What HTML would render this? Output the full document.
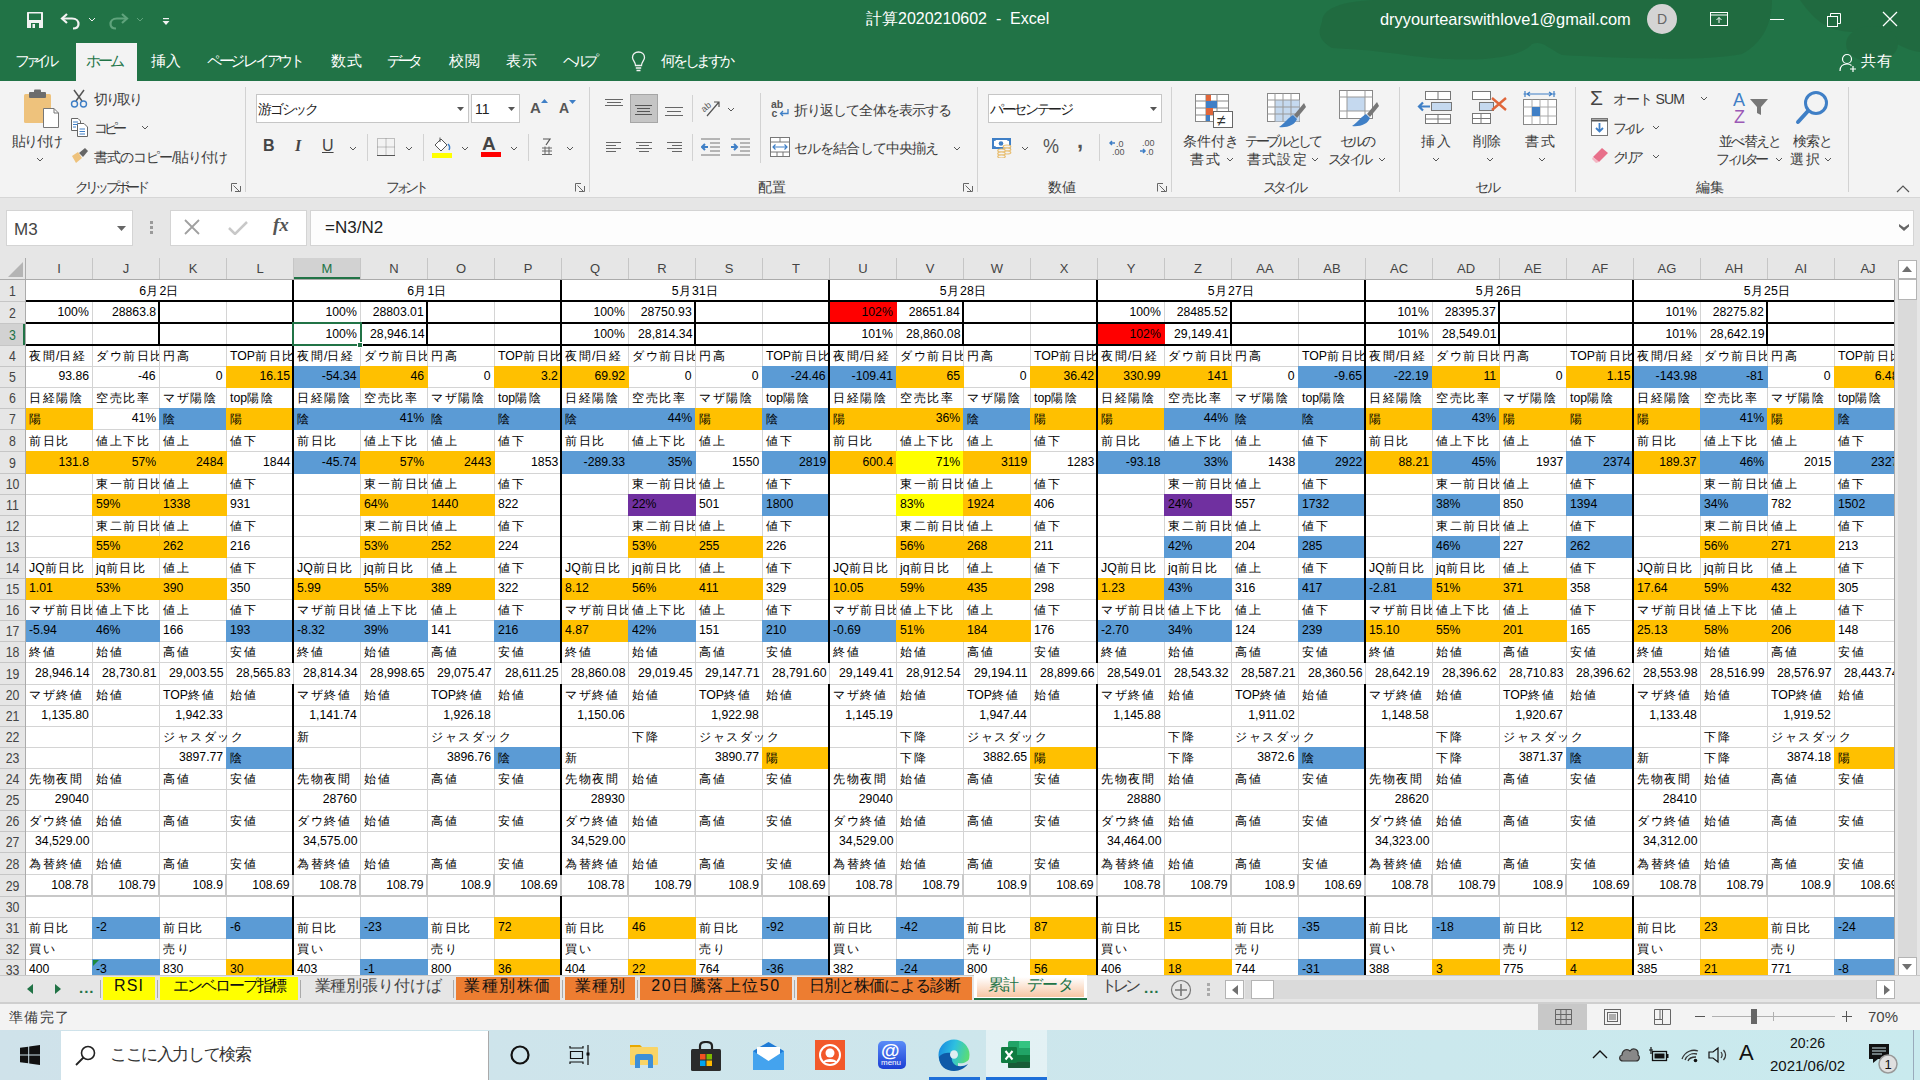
<!DOCTYPE html>
<html lang="ja"><head><meta charset="utf-8"><title>Excel</title><style>
*{margin:0;padding:0;box-sizing:border-box}
html,body{width:1920px;height:1080px;overflow:hidden;background:#fff;font-family:"Liberation Sans",sans-serif}
.a{position:absolute;white-space:nowrap}
.s{display:inline-block;transform:scaleX(0.9)}
.t{position:absolute;height:14px;line-height:14px;font-size:13.6px;color:#000;white-space:nowrap;overflow:hidden;padding:0 3px}
.tj{font-size:12.3px}
.j{letter-spacing:1.5px}
.tab{top:51px;font-size:15px;color:#fff;line-height:20px;font-feature-settings:'palt'}
.tt{line-height:20px}
.rt{font-size:14px;color:#3c3c3c;line-height:18px;font-feature-settings:'palt'}
.sep{width:1px;background:#d2d2d2}
.box{background:#fff;border:1px solid #c6c6c6}
.hd{height:16px;line-height:16px;font-size:13px;text-align:center}
.sb{background:#fff;border:1px solid #b4b4b4}
.stab{top:977px;height:23px;line-height:18px;font-size:16px;color:#111;text-align:center;font-feature-settings:'palt'}
.tsep{top:980px;width:1px;height:18px;background:#aaa}
</style></head>
<body>
<!-- TITLE BAR -->
<div class="a" style="left:0;top:0;width:1920px;height:81px;background:#217346;overflow:hidden">
  <svg class="a" style="left:0;top:0" width="1920" height="81">
    <g fill="#1f6139" opacity="0.45">
      <path d="M1322 22 C1322 6 1350 0 1380 0 L1772 0 C1772 22 1764 42 1742 54 C1700 62 1620 58 1562 55 C1548 48 1542 40 1532 44 C1520 58 1480 62 1432 58 C1400 55 1378 50 1332 48 C1318 40 1318 32 1322 22 Z"></path>
      <path d="M1800 0 L1920 0 L1920 52 C1900 50 1885 32 1855 32 C1830 32 1815 22 1800 0 Z"></path>
      <ellipse cx="1872" cy="44" rx="26" ry="18"></ellipse>
    </g>
  </svg>
  <!-- save -->
  <svg class="a" style="left:26px;top:11px" width="18" height="18" viewBox="0 0 18 18">
    <path d="M1 1.5 Q1 1 1.5 1 H16.5 Q17 1 17 1.5 V16.5 Q17 17 16.5 17 H1.5 Q1 17 1 16.5 Z" fill="#f2f2f2"></path>
    <rect x="3" y="2.5" width="12" height="6.5" fill="#217346"></rect>
    <rect x="5" y="12" width="8" height="5" fill="#217346"></rect>
    <rect x="6.5" y="13" width="2.5" height="4" fill="#f2f2f2"></rect>
  </svg>
  <!-- undo -->
  <svg class="a" style="left:60px;top:12px" width="22" height="18" viewBox="0 0 22 18">
    <path d="M7 2 L2 6.5 L7 11" fill="none" stroke="#f2f2f2" stroke-width="2.2"></path>
    <path d="M2.5 6.5 H12 C16.5 6.5 18.5 9.5 18.5 12 C18.5 14.5 16.5 16.5 13 16.5" fill="none" stroke="#f2f2f2" stroke-width="2.2"></path>
  </svg>
  <svg class="a" style="left:88px;top:17px" width="8" height="5" viewBox="0 0 8 5"><path d="M1 1 L4 4 L7 1" fill="none" stroke="#f2f2f2" stroke-width="1"></path></svg>
  <!-- redo -->
  <svg class="a" style="left:107px;top:12px" width="22" height="18" viewBox="0 0 22 18">
    <path d="M15 2 L20 6.5 L15 11" fill="none" stroke="#5fa37c" stroke-width="2.2"></path>
    <path d="M19.5 6.5 H10 C5.5 6.5 3.5 9.5 3.5 12 C3.5 14.5 5.5 16.5 9 16.5" fill="none" stroke="#5fa37c" stroke-width="2.2"></path>
  </svg>
  <svg class="a" style="left:136px;top:17px" width="8" height="5" viewBox="0 0 8 5"><path d="M1 1 L4 4 L7 1" fill="none" stroke="#5fa37c" stroke-width="1"></path></svg>
  <svg class="a" style="left:162px;top:18px" width="8" height="8" viewBox="0 0 8 8"><rect x="1" y="0" width="6" height="1.2" fill="#f2f2f2"></rect><path d="M0.5 3 H7.5 L4 7 Z" fill="#f2f2f2"></path></svg>
  <div class="a tt" style="left:866px;top:9px;font-size:16px;color:#fff;white-space:pre">計算2020210602  -  Excel</div>
  <div class="a tt" style="left:1380px;top:9px;font-size:16.4px;color:#fff">dryyourtearswithlove1@gmail.com</div>
  <div class="a" style="left:1647px;top:4px;width:30px;height:30px;border-radius:50%;background:#d4d4d4;color:#666;font-size:14px;line-height:30px;text-align:center">D</div>
  <svg class="a" style="left:1710px;top:12px" width="18" height="14" viewBox="0 0 18 14"><rect x="0.5" y="0.5" width="17" height="13" fill="none" stroke="#fff" stroke-width="1"></rect><line x1="0.5" y1="3" x2="17.5" y2="3" stroke="#fff"></line><path d="M9 11 V5.5 M6.5 8 L9 5.5 L11.5 8" fill="none" stroke="#fff"></path></svg>
  <div class="a" style="left:1770px;top:19px;width:14px;height:1px;background:#fff"></div>
  <svg class="a" style="left:1826px;top:12px" width="16" height="15" viewBox="0 0 16 15"><rect x="1.5" y="4.5" width="10" height="10" fill="none" stroke="#fff"></rect><path d="M4.5 4.5 V1.5 H14.5 V11.5 H11.5" fill="none" stroke="#fff"></path></svg>
  <svg class="a" style="left:1882px;top:11px" width="16" height="16" viewBox="0 0 16 16"><path d="M1 1 L15 15 M15 1 L1 15" stroke="#fff" stroke-width="1.3"></path></svg>
  <!-- tabs -->
  <div class="a" style="left:76px;top:43px;width:61px;height:38px;background:#f3f3f3"></div>
  <div class="a tab" style="left: 15px; letter-spacing: -5.33px;">ファイル</div>
  <div class="a tab" style="left: 86px; color: rgb(33, 115, 70); letter-spacing: -3px;">ホーム</div>
  <div class="a tab" style="left: 151px; letter-spacing: 0px;">挿入</div>
  <div class="a tab" style="left: 207px; letter-spacing: -3.27px;">ページ レイアウト</div>
  <div class="a tab" style="left: 331px; letter-spacing: 1px;">数式</div>
  <div class="a tab" style="left: 387px; letter-spacing: -4.5px;">データ</div>
  <div class="a tab" style="left: 449px; letter-spacing: 1px;">校閲</div>
  <div class="a tab" style="left: 506px; letter-spacing: 1px;">表示</div>
  <div class="a tab" style="left: 563px; letter-spacing: -4.5px;">ヘルプ</div>
  <svg class="a" style="left:631px;top:51px" width="15" height="22" viewBox="0 0 15 22"><path d="M4.5 14.5 C4.5 11 1.5 9.5 1.5 6.5 C1.5 3.2 4 1 7.5 1 C11 1 13.5 3.2 13.5 6.5 C13.5 9.5 10.5 11 10.5 14.5 Z" fill="none" stroke="#f2f2f2" stroke-width="1.3"></path><path d="M4.8 17 H10.2 M5.5 19.5 H9.5" stroke="#f2f2f2" stroke-width="1.3"></path></svg>
  <div class="a tab" style="left: 661px; letter-spacing: -3.2px;">何をしますか</div>
  <svg class="a" style="left:1839px;top:53px" width="18" height="20" viewBox="0 0 18 20"><circle cx="8" cy="6" r="4.5" fill="none" stroke="#fff" stroke-width="1.2"></circle><path d="M1 18 C1 13 4 11 8 11 C10 11 11.5 11.5 12.5 12.5" fill="none" stroke="#fff" stroke-width="1.2"></path><path d="M14 13 V19 M11 16 H17" stroke="#fff" stroke-width="1.2"></path></svg>
  <div class="a tab" style="left: 1861px; letter-spacing: 1px;">共有</div>
</div>

<!-- RIBBON -->
<div class="a" style="left:0;top:81px;width:1920px;height:117px;background:#f3f3f3;border-bottom:1px solid #d6d6d6"></div>
<!-- separators -->
<div class="a sep" style="left:245px;top:87px;height:105px"></div>
<div class="a sep" style="left:589px;top:87px;height:105px"></div>
<div class="a sep" style="left:977px;top:87px;height:105px"></div>
<div class="a sep" style="left:1171px;top:87px;height:105px"></div>
<div class="a sep" style="left:1399px;top:87px;height:105px"></div>
<div class="a sep" style="left:1575px;top:87px;height:105px"></div>
<div class="a sep" style="left:1848px;top:87px;height:105px"></div>
<!-- group labels -->
<div class="a rt" style="left: 75px; top: 178px; letter-spacing: -3.83px;">クリップボード</div>
<div class="a rt" style="left: 386px; top: 178px; letter-spacing: -4.33px;">フォント</div>
<div class="a rt" style="left:758px;top:178px">配置</div>
<div class="a rt" style="left:1048px;top:178px">数値</div>
<div class="a rt" style="left: 1263px; top: 178px; letter-spacing: -3.67px;">スタイル</div>
<div class="a rt" style="left: 1475px; top: 178px; letter-spacing: -2px;">セル</div>
<div class="a rt" style="left:1696px;top:178px">編集</div>
<!-- launchers -->
<svg class="a" style="left:231px;top:183px" width="10" height="9" viewBox="0 0 10 9"><path d="M0.5 8.5 V0.5 H6 M9.5 3 V8.5 H4 M2.5 2.5 L8 8" fill="none" stroke="#666" stroke-width="1"></path></svg>
<svg class="a" style="left:575px;top:183px" width="10" height="9" viewBox="0 0 10 9"><path d="M0.5 8.5 V0.5 H6 M9.5 3 V8.5 H4 M2.5 2.5 L8 8" fill="none" stroke="#666" stroke-width="1"></path></svg>
<svg class="a" style="left:963px;top:183px" width="10" height="9" viewBox="0 0 10 9"><path d="M0.5 8.5 V0.5 H6 M9.5 3 V8.5 H4 M2.5 2.5 L8 8" fill="none" stroke="#666" stroke-width="1"></path></svg>
<svg class="a" style="left:1157px;top:183px" width="10" height="9" viewBox="0 0 10 9"><path d="M0.5 8.5 V0.5 H6 M9.5 3 V8.5 H4 M2.5 2.5 L8 8" fill="none" stroke="#666" stroke-width="1"></path></svg>
<svg class="a" style="left:1896px;top:185px" width="14" height="8" viewBox="0 0 14 8"><path d="M1 7 L7 1 L13 7" fill="none" stroke="#555" stroke-width="1.2"></path></svg>

<!-- CLIPBOARD -->
<svg class="a" style="left:23px;top:89px" width="37" height="40" viewBox="0 0 37 40">
  <rect x="1" y="5" width="27" height="29" rx="1.5" fill="#eec27c"></rect>
  <rect x="6" y="3" width="17" height="6" rx="1" fill="#6d6d6d"></rect>
  <rect x="11" y="0.5" width="7" height="4" rx="1" fill="#6d6d6d"></rect>
  <path d="M20.5 19.5 H31 L35.5 24 V38.5 H20.5 Z" fill="#fff" stroke="#777" stroke-width="1"></path>
  <path d="M31 19.5 V24 H35.5" fill="none" stroke="#777" stroke-width="1"></path>
</svg>
<div class="a rt" style="left: 12px; top: 132px; letter-spacing: -1.67px;">貼り付け</div>
<svg class="a chev" style="left:36px;top:157px" width="8" height="5" viewBox="0 0 8 5"><path d="M1 1 L4 4 L7 1" fill="none" stroke="#555"></path></svg>
<svg class="a" style="left:70px;top:89px" width="18" height="19" viewBox="0 0 18 19">
  <path d="M4 1 L12 12 M14 1 L6 12" stroke="#555" stroke-width="1.5"></path>
  <circle cx="4.5" cy="15" r="3" fill="none" stroke="#3f7fc6" stroke-width="1.4"></circle>
  <circle cx="13.5" cy="15" r="3" fill="none" stroke="#3f7fc6" stroke-width="1.4"></circle>
</svg>
<div class="a rt" style="left: 94px; top: 90px; letter-spacing: -2.33px;">切り取り</div>
<svg class="a" style="left:71px;top:118px" width="18" height="19" viewBox="0 0 18 19">
  <path d="M0.5 0.5 H7 L9.5 3 V12.5 H0.5 Z" fill="#fff" stroke="#666"></path>
  <path d="M6.5 5.5 H13 L16.5 9 V18.5 H6.5 Z" fill="#fff" stroke="#666"></path>
  <path d="M2 4 H7 M2 6.5 H7 M2 9 H5 M8.5 11 H14 M8.5 13.5 H14 M8.5 16 H14" stroke="#3f7fc6" stroke-width="1"></path>
</svg>
<div class="a rt" style="left: 94px; top: 119px; letter-spacing: -4.5px;">コピー</div>
<svg class="a chev" style="left:141px;top:125px" width="8" height="5" viewBox="0 0 8 5"><path d="M1 1 L4 4 L7 1" fill="none" stroke="#555"></path></svg>
<svg class="a" style="left:71px;top:147px" width="18" height="17" viewBox="0 0 18 17">
  <path d="M1 9 L7 5 L11 11 L5 16 Z" fill="#eec27c"></path>
  <path d="M8 6 L14 1 L17 4 L12 10 Z" fill="#666"></path>
</svg>
<div class="a rt" style="left: 94px; top: 148px; letter-spacing: -0.99px;">書式のコピー/貼り付け</div>

<!-- FONT -->
<div class="a box" style="left:256px;top:94px;width:213px;height:29px"></div>
<div class="a rt" style="left: 258px; top: 100px; font-size: 14px; color: rgb(34, 34, 34); letter-spacing: -2.25px;">游ゴシック</div>
<svg class="a" style="left:457px;top:107px" width="7" height="4" viewBox="0 0 7 4"><path d="M0 0 H7 L3.5 4 Z" fill="#555"></path></svg>
<div class="a box" style="left:471px;top:94px;width:49px;height:29px"></div>
<div class="a rt" style="left:475px;top:100px;font-size:14px;color:#222">11</div>
<svg class="a" style="left:508px;top:107px" width="7" height="4" viewBox="0 0 7 4"><path d="M0 0 H7 L3.5 4 Z" fill="#555"></path></svg>
<div class="a" style="left:530px;top:99px;font-size:15px;color:#555;font-weight:bold">A</div>
<svg class="a" style="left:541px;top:99px" width="7" height="4" viewBox="0 0 7 4"><path d="M0 4 L3.5 0 L7 4 Z" fill="#3f7fc6"></path></svg>
<div class="a" style="left:559px;top:100px;font-size:14px;color:#555;font-weight:bold">A</div>
<svg class="a" style="left:569px;top:100px" width="7" height="4" viewBox="0 0 7 4"><path d="M0 0 L3.5 4 L7 0 Z" fill="#3f7fc6"></path></svg>
<div class="a" style="left:263px;top:137px;font-size:16px;color:#444;font-weight:bold">B</div>
<div class="a" style="left:295px;top:137px;font-size:16px;color:#444;font-style:italic;font-family:'Liberation Serif',serif;font-weight:bold">I</div>
<div class="a" style="left:322px;top:137px;font-size:16px;color:#444;text-decoration:underline">U</div>
<svg class="a chev" style="left:349px;top:146px" width="8" height="5" viewBox="0 0 8 5"><path d="M1 1 L4 4 L7 1" fill="none" stroke="#555"></path></svg>
<div class="a sep" style="left:367px;top:134px;height:27px"></div>
<svg class="a" style="left:377px;top:138px" width="18" height="18" viewBox="0 0 18 18"><path d="M0.5 0.5 H17.5 V17.5 H0.5 Z M9 0.5 V17.5 M0.5 9 H17.5" fill="none" stroke="#888" stroke-width="1" stroke-dasharray="1 1"></path><path d="M0 17.5 H18" stroke="#555"></path></svg>
<svg class="a chev" style="left:405px;top:146px" width="8" height="5" viewBox="0 0 8 5"><path d="M1 1 L4 4 L7 1" fill="none" stroke="#555"></path></svg>
<div class="a sep" style="left:423px;top:134px;height:27px"></div>
<svg class="a" style="left:432px;top:137px" width="21" height="21" viewBox="0 0 21 21"><path d="M3 8 L9 2 L15 8 L9 14 Z" fill="#fff" stroke="#555"></path><path d="M8 0.5 V5" stroke="#555"></path><path d="M16 7 C18 9 18 11 17 13" fill="none" stroke="#3f7fc6" stroke-width="1.5"></path><rect x="0" y="16" width="20" height="5" fill="#ffff00"></rect></svg>
<svg class="a chev" style="left:461px;top:146px" width="8" height="5" viewBox="0 0 8 5"><path d="M1 1 L4 4 L7 1" fill="none" stroke="#555"></path></svg>
<div class="a" style="left:482px;top:134px;font-size:19px;color:#444;font-weight:bold;line-height:20px">A</div>
<div class="a" style="left:481px;top:152px;width:20px;height:5px;background:#ff0000"></div>
<svg class="a chev" style="left:510px;top:146px" width="8" height="5" viewBox="0 0 8 5"><path d="M1 1 L4 4 L7 1" fill="none" stroke="#555"></path></svg>
<div class="a sep" style="left:528px;top:134px;height:27px"></div>
<svg class="a" style="left:541px;top:138px" width="12" height="18" viewBox="0 0 12 18"><path d="M2 1 H9 L5 7" fill="none" stroke="#555" stroke-width="1.2"></path><path d="M1 10 H11 M1 13 H11 M1 16.5 H11 M4 8.5 V17 M8 8.5 V17" stroke="#666" stroke-width="1"></path></svg>
<svg class="a chev" style="left:566px;top:146px" width="8" height="5" viewBox="0 0 8 5"><path d="M1 1 L4 4 L7 1" fill="none" stroke="#555"></path></svg>

<!-- ALIGNMENT -->
<svg class="a" style="left:605px;top:98px" width="19" height="10" viewBox="0 0 19 10"><path d="M0 1.5 H18 M2 4.5 H16 M0 7.5 H18" stroke="#666" stroke-width="1"></path></svg>
<div class="a" style="left:630px;top:94px;width:28px;height:29px;background:#c5c5c5;border:1px solid #a6a6a6"></div>
<svg class="a" style="left:635px;top:104px" width="19" height="12" viewBox="0 0 19 12"><path d="M0 1.5 H17 M2 4.5 H15 M2 7.5 H15 M0 10.5 H17" stroke="#555" stroke-width="1"></path></svg>
<svg class="a" style="left:665px;top:105px" width="19" height="13" viewBox="0 0 19 13"><path d="M0 2.5 H18 M2 6.5 H16 M0 10.5 H18" stroke="#666" stroke-width="1"></path></svg>
<div class="a sep" style="left:692px;top:95px;height:27px"></div>
<svg class="a" style="left:700px;top:97px" width="22" height="20" viewBox="0 0 22 20"><text x="1" y="13" font-size="9" fill="#555" transform="rotate(-40 6 10)" font-family="Liberation Sans">ab</text><path d="M7 19 L19 5 M14 5 H19 V10" fill="none" stroke="#555" stroke-width="1.2"></path></svg>
<svg class="a chev" style="left:727px;top:107px" width="8" height="5" viewBox="0 0 8 5"><path d="M1 1 L4 4 L7 1" fill="none" stroke="#555"></path></svg>
<div class="a sep" style="left:760px;top:93px;height:70px"></div>
<svg class="a" style="left:771px;top:99px" width="20" height="20" viewBox="0 0 20 20"><text x="0" y="8.5" font-size="10.5" fill="#555" font-family="Liberation Sans" font-weight="bold">ab</text><text x="0.5" y="18" font-size="10.5" fill="#555" font-family="Liberation Sans" font-weight="bold">c</text><path d="M17 10 V14.5 H9.5 M12 12 L9.5 14.5 L12 17" fill="none" stroke="#3f7fc6" stroke-width="1.3"></path></svg>
<div class="a rt" style="left: 794px; top: 101px; letter-spacing: -0.91px;">折り返して全体を表示する</div>
<svg class="a" style="left:606px;top:141px" width="16" height="12" viewBox="0 0 16 12"><path d="M0 1.5 H15 M0 4.5 H10 M0 7.5 H15 M0 10.5 H10" stroke="#666" stroke-width="1"></path></svg>
<svg class="a" style="left:636px;top:141px" width="16" height="12" viewBox="0 0 16 12"><path d="M0 1.5 H16 M3 4.5 H13 M0 7.5 H16 M3 10.5 H13" stroke="#666" stroke-width="1"></path></svg>
<svg class="a" style="left:666px;top:141px" width="16" height="12" viewBox="0 0 16 12"><path d="M1 1.5 H16 M6 4.5 H16 M1 7.5 H16 M6 10.5 H16" stroke="#666" stroke-width="1"></path></svg>
<div class="a sep" style="left:692px;top:134px;height:27px"></div>
<svg class="a" style="left:701px;top:138px" width="20" height="18" viewBox="0 0 20 18"><path d="M0 1 H19 M9 5 H19 M9 9 H19 M9 13 H19 M0 17 H19" stroke="#777" stroke-width="1"></path><path d="M7 9 H1 M4 6 L1 9 L4 12" fill="none" stroke="#3f7fc6" stroke-width="2"></path></svg>
<svg class="a" style="left:731px;top:138px" width="20" height="18" viewBox="0 0 20 18"><path d="M0 1 H19 M9 5 H19 M9 9 H19 M9 13 H19 M0 17 H19" stroke="#777" stroke-width="1"></path><path d="M0 9 H6 M3 6 L6 9 L3 12" fill="none" stroke="#3f7fc6" stroke-width="2"></path></svg>
<svg class="a" style="left:770px;top:137px" width="20" height="20" viewBox="0 0 20 20"><rect x="0.5" y="0.5" width="19" height="19" fill="#fff" stroke="#777"></rect><path d="M0.5 5 H19.5 M0.5 15 H19.5 M10 0.5 V5 M7 15 V19.5 M13 15 V19.5" stroke="#777"></path><path d="M3 10 H17 M5.5 7.5 L3 10 L5.5 12.5 M14.5 7.5 L17 10 L14.5 12.5" fill="none" stroke="#3f7fc6" stroke-width="1.2"></path></svg>
<div class="a rt" style="left: 794px; top: 139px; letter-spacing: -0.9px;">セルを結合して中央揃え</div>
<svg class="a chev" style="left:953px;top:146px" width="8" height="5" viewBox="0 0 8 5"><path d="M1 1 L4 4 L7 1" fill="none" stroke="#555"></path></svg>

<!-- NUMBER -->
<div class="a box" style="left:988px;top:94px;width:174px;height:29px"></div>
<div class="a rt" style="left: 990px; top: 100px; font-size: 14px; color: rgb(34, 34, 34); letter-spacing: -2.33px;">パーセンテージ</div>
<svg class="a" style="left:1150px;top:107px" width="7" height="4" viewBox="0 0 7 4"><path d="M0 0 H7 L3.5 4 Z" fill="#555"></path></svg>
<svg class="a" style="left:992px;top:138px" width="20" height="20" viewBox="0 0 20 20"><rect x="0" y="0" width="19" height="11" fill="#3f7fc6"></rect><path d="M2 3 C4 3 4 2 4 2 H15 C15 2 15 3 17 3 V8 C15 8 15 9 15 9 H4 C4 9 4 8 2 8 Z" fill="#fff"></path><circle cx="9" cy="5.5" r="2.3" fill="#3f7fc6"></circle><g fill="#f3f3f3" stroke="#e8bf74" stroke-width="1.2"><ellipse cx="15" cy="8.5" rx="3.8" ry="1.5"></ellipse><ellipse cx="15" cy="11.5" rx="3.8" ry="1.5"></ellipse><ellipse cx="15" cy="14.5" rx="3.8" ry="1.5"></ellipse><ellipse cx="9.5" cy="12.5" rx="3.8" ry="1.5"></ellipse><ellipse cx="9.5" cy="15.5" rx="3.8" ry="1.5"></ellipse><ellipse cx="9.5" cy="18.5" rx="3.8" ry="1.5"></ellipse></g></svg>
<svg class="a chev" style="left:1021px;top:146px" width="8" height="5" viewBox="0 0 8 5"><path d="M1 1 L4 4 L7 1" fill="none" stroke="#555"></path></svg>
<div class="a" style="left:1043px;top:136px;font-size:18px;color:#555;transform:scaleY(1.1)">%</div>
<div class="a" style="left:1077px;top:128px;font-size:22px;color:#555;font-weight:bold">,</div>
<div class="a sep" style="left:1099px;top:134px;height:27px"></div>
<svg class="a" style="left:1109px;top:138px" width="18" height="18" viewBox="0 0 18 18"><path d="M6 5 H1 M3 3 L1 5 L3 7" fill="none" stroke="#3f7fc6" stroke-width="1.5"></path><text x="7" y="9" font-size="9" fill="#555" font-family="Liberation Sans">.0</text><text x="3" y="17" font-size="9" fill="#555" font-family="Liberation Sans">.00</text></svg>
<svg class="a" style="left:1139px;top:138px" width="18" height="18" viewBox="0 0 18 18"><text x="3" y="8" font-size="9" fill="#555" font-family="Liberation Sans">.00</text><path d="M1 13 H6 M4 11 L6 13 L4 15" fill="none" stroke="#3f7fc6" stroke-width="1.5"></path><text x="7" y="17" font-size="9" fill="#555" font-family="Liberation Sans">.0</text></svg>

<!-- STYLES -->
<svg class="a" style="left:1195px;top:94px" width="40" height="36" viewBox="0 0 40 36">
  <rect x="0.5" y="0.5" width="33" height="27" fill="#fff" stroke="#888"></rect>
  <path d="M0.5 7 H33.5 M0.5 14 H33.5 M0.5 21 H33.5 M11 0.5 V27.5 M22 0.5 V27.5" stroke="#888"></path>
  <rect x="11" y="1" width="5" height="6" fill="#e0663a"></rect><rect x="11" y="7" width="11" height="7" fill="#3f7fc6"></rect><rect x="11" y="14" width="7" height="7" fill="#e0663a"></rect><rect x="11" y="21" width="4" height="6" fill="#3f7fc6"></rect>
  <rect x="18.5" y="17.5" width="19" height="16" fill="#fff" stroke="#666"></rect>
  <text x="22" y="32" font-size="16" fill="#333" font-family="Liberation Sans">≠</text>
</svg>
<div class="a rt" style="left: 1183px; top: 132px; letter-spacing: 0px;">条件付き</div>
<div class="a rt" style="left: 1190px; top: 150px; letter-spacing: 2px;">書式</div>
<svg class="a chev" style="left:1226px;top:157px" width="8" height="5" viewBox="0 0 8 5"><path d="M1 1 L4 4 L7 1" fill="none" stroke="#555"></path></svg>
<svg class="a" style="left:1267px;top:93px" width="40" height="37" viewBox="0 0 40 37">
  <rect x="0.5" y="0.5" width="32" height="28" fill="#fff" stroke="#888"></rect>
  <rect x="8" y="7" width="24.5" height="21.5" fill="#c5d9ef"></rect>
  <path d="M0.5 7 H32.5 M0.5 14 H32.5 M0.5 21 H32.5 M8 0.5 V28.5 M16 0.5 V28.5 M24 0.5 V28.5" stroke="#999"></path>
  <path d="M37 10 L27 22 L30 25 L39 14 Z" fill="#777"></path>
  <path d="M26 22 C22 24 18 30 12 34 C20 35 28 32 30 26 Z" fill="#3f7fc6"></path>
</svg>
<div class="a rt" style="left: 1245px; top: 132px; letter-spacing: -3.33px;">テーブルとして</div>
<div class="a rt" style="left: 1247px; top: 150px; letter-spacing: 1.17px;">書式設定</div>
<svg class="a chev" style="left:1311px;top:157px" width="8" height="5" viewBox="0 0 8 5"><path d="M1 1 L4 4 L7 1" fill="none" stroke="#555"></path></svg>
<svg class="a" style="left:1339px;top:90px" width="40" height="39" viewBox="0 0 40 39">
  <rect x="0.5" y="0.5" width="33" height="28" fill="#fff" stroke="#888"></rect>
  <rect x="8" y="7" width="18" height="14" fill="#c5d9ef"></rect>
  <path d="M0.5 7 H33.5 M0.5 21 H33.5 M8 0.5 V28.5 M26 0.5 V28.5" stroke="#999"></path>
  <path d="M38 12 L28 24 L31 27 L40 16 Z" fill="#777"></path>
  <path d="M27 24 C23 26 19 32 13 36 C21 37 29 34 31 28 Z" fill="#3f7fc6"></path>
</svg>
<div class="a rt" style="left: 1340px; top: 132px; letter-spacing: -3px;">セルの</div>
<div class="a rt" style="left: 1328px; top: 150px; letter-spacing: -3.67px;">スタイル</div>
<svg class="a chev" style="left:1378px;top:157px" width="8" height="5" viewBox="0 0 8 5"><path d="M1 1 L4 4 L7 1" fill="none" stroke="#555"></path></svg>

<!-- CELLS -->
<svg class="a" style="left:1417px;top:90px" width="36" height="36" viewBox="0 0 36 36">
  <rect x="8.5" y="1.5" width="25" height="8" fill="#fff" stroke="#777"></rect><path d="M21 1.5 V9.5" stroke="#777"></path>
  <rect x="14.5" y="12.5" width="20" height="8" fill="#c5d9ef" stroke="#777"></rect>
  <rect x="8.5" y="24.5" width="25" height="9" fill="#fff" stroke="#777"></rect><path d="M21 24.5 V33.5 M8.5 29 H33.5" stroke="#777"></path>
  <path d="M13 16.5 H2 M6 12.5 L2 16.5 L6 20.5" fill="none" stroke="#3f7fc6" stroke-width="2.2"></path>
</svg>
<div class="a rt" style="left: 1421px; top: 132px; letter-spacing: 2px;">挿入</div>
<svg class="a chev" style="left:1432px;top:157px" width="8" height="5" viewBox="0 0 8 5"><path d="M1 1 L4 4 L7 1" fill="none" stroke="#555"></path></svg>
<svg class="a" style="left:1471px;top:90px" width="38" height="36" viewBox="0 0 38 36">
  <rect x="1.5" y="1.5" width="18" height="8" fill="#fff" stroke="#777"></rect>
  <rect x="8.5" y="12.5" width="14" height="8" fill="#c5d9ef" stroke="#777"></rect>
  <rect x="1.5" y="23.5" width="18" height="10" fill="#fff" stroke="#777"></rect><path d="M10 23.5 V33.5 M1.5 28.5 H19.5" stroke="#777"></path>
  <path d="M21 8 L35 20 M35 8 L21 20" stroke="#e0663a" stroke-width="2.4"></path>
</svg>
<div class="a rt" style="left:1473px;top:132px">削除</div>
<svg class="a chev" style="left:1486px;top:157px" width="8" height="5" viewBox="0 0 8 5"><path d="M1 1 L4 4 L7 1" fill="none" stroke="#555"></path></svg>
<svg class="a" style="left:1522px;top:89px" width="36" height="39" viewBox="0 0 36 39">
  <path d="M1.5 5 H33.5 M3 2 V8 M32 2 V8 M5 5 L8 3 M5 5 L8 7 M30 5 L27 3 M30 5 L27 7" fill="none" stroke="#3f7fc6" stroke-width="1.2"></path>
  <rect x="1.5" y="10.5" width="33" height="25" fill="#fff" stroke="#888"></rect>
  <path d="M1.5 18 H34.5 M1.5 27 H34.5 M10 10.5 V35.5 M18 10.5 V35.5 M26 10.5 V35.5" stroke="#aaa"></path>
  <rect x="10" y="18" width="8" height="9" fill="#3f7fc6"></rect>
</svg>
<div class="a rt" style="left: 1525px; top: 132px; letter-spacing: 2px;">書式</div>
<svg class="a chev" style="left:1538px;top:157px" width="8" height="5" viewBox="0 0 8 5"><path d="M1 1 L4 4 L7 1" fill="none" stroke="#555"></path></svg>

<!-- EDITING -->
<div class="a" style="left:1590px;top:86px;font-size:21px;color:#444">Σ</div>
<div class="a rt" style="left: 1613px; top: 90px; letter-spacing: -0.83px;">オート SUM</div>
<svg class="a chev" style="left:1700px;top:96px" width="8" height="5" viewBox="0 0 8 5"><path d="M1 1 L4 4 L7 1" fill="none" stroke="#555"></path></svg>
<svg class="a" style="left:1591px;top:118px" width="18" height="18" viewBox="0 0 18 18"><rect x="0.5" y="0.5" width="16" height="17" fill="#fff" stroke="#777"></rect><path d="M0.5 2.5 H16.5" stroke="#555" stroke-width="2"></path><path d="M8.5 5 V13 M5 10 L8.5 13.5 L12 10" fill="none" stroke="#3f7fc6" stroke-width="1.8"></path></svg>
<div class="a rt" style="left: 1613px; top: 119px; letter-spacing: -5.5px;">フィル</div>
<svg class="a chev" style="left:1652px;top:125px" width="8" height="5" viewBox="0 0 8 5"><path d="M1 1 L4 4 L7 1" fill="none" stroke="#555"></path></svg>
<svg class="a" style="left:1591px;top:147px" width="18" height="17" viewBox="0 0 18 17"><path d="M11 1 L17 6 L8 15 L2 10 Z" fill="#e8708a"></path><path d="M2 10 L8 15 L5 16 L1 12 Z" fill="#f4b7c4"></path></svg>
<div class="a rt" style="left: 1613px; top: 148px; letter-spacing: -5.5px;">クリア</div>
<svg class="a chev" style="left:1652px;top:154px" width="8" height="5" viewBox="0 0 8 5"><path d="M1 1 L4 4 L7 1" fill="none" stroke="#555"></path></svg>
<svg class="a" style="left:1733px;top:91px" width="36" height="33" viewBox="0 0 36 33">
  <text x="0" y="15" font-size="18" fill="#3f7fc6" font-family="Liberation Sans">A</text>
  <text x="1" y="32" font-size="18" fill="#9b59b6" font-family="Liberation Sans">Z</text>
  <path d="M17 8 H35 L28 16 V24 L24 22 V16 Z" fill="#777"></path>
</svg>
<div class="a rt" style="left: 1719px; top: 132px; letter-spacing: -1.75px;">並べ替えと</div>
<div class="a rt" style="left: 1716px; top: 150px; letter-spacing: -4.25px;">フィルター</div>
<svg class="a chev" style="left:1775px;top:157px" width="8" height="5" viewBox="0 0 8 5"><path d="M1 1 L4 4 L7 1" fill="none" stroke="#555"></path></svg>
<svg class="a" style="left:1795px;top:89px" width="36" height="37" viewBox="0 0 36 37"><circle cx="21" cy="14" r="10.5" fill="none" stroke="#3f7fc6" stroke-width="3"></circle><path d="M13 22 L3 33" stroke="#3f7fc6" stroke-width="4" stroke-linecap="round"></path></svg>
<div class="a rt" style="left: 1793px; top: 132px; letter-spacing: -1px;">検索と</div>
<div class="a rt" style="left: 1790px; top: 150px; letter-spacing: 2px;">選択</div>
<svg class="a chev" style="left:1824px;top:157px" width="8" height="5" viewBox="0 0 8 5"><path d="M1 1 L4 4 L7 1" fill="none" stroke="#555"></path></svg>

<div id="grid" class="a" style="left:26px;top:280px;width:1868px;height:695px;overflow:hidden;background:#fff"><div class="a" style="left:66px;top:21px;width:1px;height:700px;background:#d4d4d4"></div><div class="a" style="left:133px;top:21px;width:1px;height:700px;background:#d4d4d4"></div><div class="a" style="left:200px;top:21px;width:1px;height:700px;background:#d4d4d4"></div><div class="a" style="left:267px;top:0px;width:1px;height:700px;background:#d4d4d4"></div><div class="a" style="left:334px;top:21px;width:1px;height:700px;background:#d4d4d4"></div><div class="a" style="left:401px;top:21px;width:1px;height:700px;background:#d4d4d4"></div><div class="a" style="left:468px;top:21px;width:1px;height:700px;background:#d4d4d4"></div><div class="a" style="left:535px;top:0px;width:1px;height:700px;background:#d4d4d4"></div><div class="a" style="left:602px;top:21px;width:1px;height:700px;background:#d4d4d4"></div><div class="a" style="left:669px;top:21px;width:1px;height:700px;background:#d4d4d4"></div><div class="a" style="left:736px;top:21px;width:1px;height:700px;background:#d4d4d4"></div><div class="a" style="left:803px;top:0px;width:1px;height:700px;background:#d4d4d4"></div><div class="a" style="left:870px;top:21px;width:1px;height:700px;background:#d4d4d4"></div><div class="a" style="left:937px;top:21px;width:1px;height:700px;background:#d4d4d4"></div><div class="a" style="left:1004px;top:21px;width:1px;height:700px;background:#d4d4d4"></div><div class="a" style="left:1071px;top:0px;width:1px;height:700px;background:#d4d4d4"></div><div class="a" style="left:1138px;top:21px;width:1px;height:700px;background:#d4d4d4"></div><div class="a" style="left:1205px;top:21px;width:1px;height:700px;background:#d4d4d4"></div><div class="a" style="left:1272px;top:21px;width:1px;height:700px;background:#d4d4d4"></div><div class="a" style="left:1339px;top:0px;width:1px;height:700px;background:#d4d4d4"></div><div class="a" style="left:1406px;top:21px;width:1px;height:700px;background:#d4d4d4"></div><div class="a" style="left:1473px;top:21px;width:1px;height:700px;background:#d4d4d4"></div><div class="a" style="left:1540px;top:21px;width:1px;height:700px;background:#d4d4d4"></div><div class="a" style="left:1607px;top:0px;width:1px;height:700px;background:#d4d4d4"></div><div class="a" style="left:1674px;top:21px;width:1px;height:700px;background:#d4d4d4"></div><div class="a" style="left:1741px;top:21px;width:1px;height:700px;background:#d4d4d4"></div><div class="a" style="left:1808px;top:21px;width:1px;height:700px;background:#d4d4d4"></div><div class="a" style="left:1875px;top:0px;width:1px;height:700px;background:#d4d4d4"></div><div class="a" style="left:0px;top:21px;width:1900px;height:1px;background:#d4d4d4"></div><div class="a" style="left:0px;top:43px;width:1900px;height:1px;background:#d4d4d4"></div><div class="a" style="left:0px;top:65px;width:1900px;height:1px;background:#d4d4d4"></div><div class="a" style="left:0px;top:86px;width:1900px;height:1px;background:#d4d4d4"></div><div class="a" style="left:0px;top:107px;width:1900px;height:1px;background:#d4d4d4"></div><div class="a" style="left:0px;top:128px;width:1900px;height:1px;background:#d4d4d4"></div><div class="a" style="left:0px;top:149px;width:1900px;height:1px;background:#d4d4d4"></div><div class="a" style="left:0px;top:171px;width:1900px;height:1px;background:#d4d4d4"></div><div class="a" style="left:0px;top:193px;width:1900px;height:1px;background:#d4d4d4"></div><div class="a" style="left:0px;top:214px;width:1900px;height:1px;background:#d4d4d4"></div><div class="a" style="left:0px;top:235px;width:1900px;height:1px;background:#d4d4d4"></div><div class="a" style="left:0px;top:256px;width:1900px;height:1px;background:#d4d4d4"></div><div class="a" style="left:0px;top:277px;width:1900px;height:1px;background:#d4d4d4"></div><div class="a" style="left:0px;top:298px;width:1900px;height:1px;background:#d4d4d4"></div><div class="a" style="left:0px;top:319px;width:1900px;height:1px;background:#d4d4d4"></div><div class="a" style="left:0px;top:340px;width:1900px;height:1px;background:#d4d4d4"></div><div class="a" style="left:0px;top:361px;width:1900px;height:1px;background:#d4d4d4"></div><div class="a" style="left:0px;top:382px;width:1900px;height:1px;background:#d4d4d4"></div><div class="a" style="left:0px;top:404px;width:1900px;height:1px;background:#d4d4d4"></div><div class="a" style="left:0px;top:425px;width:1900px;height:1px;background:#d4d4d4"></div><div class="a" style="left:0px;top:446px;width:1900px;height:1px;background:#d4d4d4"></div><div class="a" style="left:0px;top:467px;width:1900px;height:1px;background:#d4d4d4"></div><div class="a" style="left:0px;top:488px;width:1900px;height:1px;background:#d4d4d4"></div><div class="a" style="left:0px;top:509px;width:1900px;height:1px;background:#d4d4d4"></div><div class="a" style="left:0px;top:530px;width:1900px;height:1px;background:#d4d4d4"></div><div class="a" style="left:0px;top:551px;width:1900px;height:1px;background:#d4d4d4"></div><div class="a" style="left:0px;top:572px;width:1900px;height:1px;background:#d4d4d4"></div><div class="a" style="left:0px;top:594px;width:1900px;height:1px;background:#d4d4d4"></div><div class="a" style="left:0px;top:616px;width:1900px;height:1px;background:#d4d4d4"></div><div class="a" style="left:0px;top:637px;width:1900px;height:1px;background:#d4d4d4"></div><div class="a" style="left:0px;top:658px;width:1900px;height:1px;background:#d4d4d4"></div><div class="a" style="left:0px;top:679px;width:1900px;height:1px;background:#d4d4d4"></div><div class="a" style="left:0px;top:700px;width:1900px;height:1px;background:#d4d4d4"></div><div class="a" style="left:-2px;top:594px;width:2px;height:23px;background:#c8c8c8"></div><div class="a" style="left:65px;top:594px;width:2px;height:23px;background:#c8c8c8"></div><div class="a" style="left:132px;top:594px;width:2px;height:23px;background:#c8c8c8"></div><div class="a" style="left:199px;top:594px;width:2px;height:23px;background:#c8c8c8"></div><div class="a" style="left:266px;top:594px;width:2px;height:23px;background:#c8c8c8"></div><div class="a" style="left:333px;top:594px;width:2px;height:23px;background:#c8c8c8"></div><div class="a" style="left:400px;top:594px;width:2px;height:23px;background:#c8c8c8"></div><div class="a" style="left:467px;top:594px;width:2px;height:23px;background:#c8c8c8"></div><div class="a" style="left:534px;top:594px;width:2px;height:23px;background:#c8c8c8"></div><div class="a" style="left:601px;top:594px;width:2px;height:23px;background:#c8c8c8"></div><div class="a" style="left:668px;top:594px;width:2px;height:23px;background:#c8c8c8"></div><div class="a" style="left:735px;top:594px;width:2px;height:23px;background:#c8c8c8"></div><div class="a" style="left:802px;top:594px;width:2px;height:23px;background:#c8c8c8"></div><div class="a" style="left:869px;top:594px;width:2px;height:23px;background:#c8c8c8"></div><div class="a" style="left:936px;top:594px;width:2px;height:23px;background:#c8c8c8"></div><div class="a" style="left:1003px;top:594px;width:2px;height:23px;background:#c8c8c8"></div><div class="a" style="left:1070px;top:594px;width:2px;height:23px;background:#c8c8c8"></div><div class="a" style="left:1137px;top:594px;width:2px;height:23px;background:#c8c8c8"></div><div class="a" style="left:1204px;top:594px;width:2px;height:23px;background:#c8c8c8"></div><div class="a" style="left:1271px;top:594px;width:2px;height:23px;background:#c8c8c8"></div><div class="a" style="left:1338px;top:594px;width:2px;height:23px;background:#c8c8c8"></div><div class="a" style="left:1405px;top:594px;width:2px;height:23px;background:#c8c8c8"></div><div class="a" style="left:1472px;top:594px;width:2px;height:23px;background:#c8c8c8"></div><div class="a" style="left:1539px;top:594px;width:2px;height:23px;background:#c8c8c8"></div><div class="a" style="left:1606px;top:594px;width:2px;height:23px;background:#c8c8c8"></div><div class="a" style="left:1673px;top:594px;width:2px;height:23px;background:#c8c8c8"></div><div class="a" style="left:1740px;top:594px;width:2px;height:23px;background:#c8c8c8"></div><div class="a" style="left:1807px;top:594px;width:2px;height:23px;background:#c8c8c8"></div><div class="a" style="left:1874px;top:594px;width:2px;height:23px;background:#c8c8c8"></div><div class="a" style="left:0px;top:615px;width:1900px;height:2px;background:#c8c8c8"></div><div class="a" style="left:200px;top:86px;width:68px;height:22px;background:#ffc000"></div><div class="a" style="left:-1px;top:128px;width:68px;height:22px;background:#ffc000"></div><div class="a" style="left:133px;top:128px;width:68px;height:22px;background:#5b9bd5"></div><div class="a" style="left:200px;top:128px;width:68px;height:22px;background:#ffc000"></div><div class="a" style="left:-1px;top:171px;width:68px;height:23px;background:#ffc000"></div><div class="a" style="left:66px;top:171px;width:68px;height:23px;background:#ffc000"></div><div class="a" style="left:133px;top:171px;width:68px;height:23px;background:#ffc000"></div><div class="a" style="left:66px;top:214px;width:68px;height:22px;background:#ffc000"></div><div class="a" style="left:133px;top:214px;width:68px;height:22px;background:#ffc000"></div><div class="a" style="left:66px;top:256px;width:68px;height:22px;background:#ffc000"></div><div class="a" style="left:133px;top:256px;width:68px;height:22px;background:#ffc000"></div><div class="a" style="left:-1px;top:298px;width:68px;height:22px;background:#ffc000"></div><div class="a" style="left:66px;top:298px;width:68px;height:22px;background:#ffc000"></div><div class="a" style="left:133px;top:298px;width:68px;height:22px;background:#ffc000"></div><div class="a" style="left:-1px;top:340px;width:68px;height:22px;background:#5b9bd5"></div><div class="a" style="left:66px;top:340px;width:68px;height:22px;background:#5b9bd5"></div><div class="a" style="left:200px;top:340px;width:68px;height:22px;background:#5b9bd5"></div><div class="a" style="left:200px;top:467px;width:68px;height:22px;background:#5b9bd5"></div><div class="a" style="left:66px;top:637px;width:68px;height:22px;background:#5b9bd5"></div><div class="a" style="left:200px;top:637px;width:68px;height:22px;background:#5b9bd5"></div><div class="a" style="left:66px;top:679px;width:68px;height:22px;background:#5b9bd5"></div><div class="a" style="left:200px;top:679px;width:68px;height:22px;background:#ffc000"></div><div class="a" style="left:267px;top:86px;width:68px;height:22px;background:#5b9bd5"></div><div class="a" style="left:334px;top:86px;width:68px;height:22px;background:#ffc000"></div><div class="a" style="left:468px;top:86px;width:68px;height:22px;background:#ffc000"></div><div class="a" style="left:267px;top:128px;width:68px;height:22px;background:#5b9bd5"></div><div class="a" style="left:334px;top:128px;width:68px;height:22px;background:#5b9bd5"></div><div class="a" style="left:401px;top:128px;width:68px;height:22px;background:#5b9bd5"></div><div class="a" style="left:468px;top:128px;width:68px;height:22px;background:#5b9bd5"></div><div class="a" style="left:267px;top:171px;width:68px;height:23px;background:#5b9bd5"></div><div class="a" style="left:334px;top:171px;width:68px;height:23px;background:#ffc000"></div><div class="a" style="left:401px;top:171px;width:68px;height:23px;background:#ffc000"></div><div class="a" style="left:334px;top:214px;width:68px;height:22px;background:#ffc000"></div><div class="a" style="left:401px;top:214px;width:68px;height:22px;background:#ffc000"></div><div class="a" style="left:334px;top:256px;width:68px;height:22px;background:#ffc000"></div><div class="a" style="left:401px;top:256px;width:68px;height:22px;background:#ffc000"></div><div class="a" style="left:267px;top:298px;width:68px;height:22px;background:#ffc000"></div><div class="a" style="left:334px;top:298px;width:68px;height:22px;background:#ffc000"></div><div class="a" style="left:401px;top:298px;width:68px;height:22px;background:#ffc000"></div><div class="a" style="left:267px;top:340px;width:68px;height:22px;background:#5b9bd5"></div><div class="a" style="left:334px;top:340px;width:68px;height:22px;background:#5b9bd5"></div><div class="a" style="left:468px;top:340px;width:68px;height:22px;background:#5b9bd5"></div><div class="a" style="left:468px;top:467px;width:68px;height:22px;background:#5b9bd5"></div><div class="a" style="left:334px;top:637px;width:68px;height:22px;background:#5b9bd5"></div><div class="a" style="left:468px;top:637px;width:68px;height:22px;background:#ffc000"></div><div class="a" style="left:334px;top:679px;width:68px;height:22px;background:#5b9bd5"></div><div class="a" style="left:468px;top:679px;width:68px;height:22px;background:#ffc000"></div><div class="a" style="left:535px;top:86px;width:68px;height:22px;background:#ffc000"></div><div class="a" style="left:736px;top:86px;width:68px;height:22px;background:#5b9bd5"></div><div class="a" style="left:535px;top:128px;width:68px;height:22px;background:#5b9bd5"></div><div class="a" style="left:602px;top:128px;width:68px;height:22px;background:#5b9bd5"></div><div class="a" style="left:669px;top:128px;width:68px;height:22px;background:#ffc000"></div><div class="a" style="left:736px;top:128px;width:68px;height:22px;background:#5b9bd5"></div><div class="a" style="left:535px;top:171px;width:68px;height:23px;background:#5b9bd5"></div><div class="a" style="left:602px;top:171px;width:68px;height:23px;background:#5b9bd5"></div><div class="a" style="left:736px;top:171px;width:68px;height:23px;background:#5b9bd5"></div><div class="a" style="left:602px;top:214px;width:68px;height:22px;background:#7030a0"></div><div class="a" style="left:736px;top:214px;width:68px;height:22px;background:#5b9bd5"></div><div class="a" style="left:602px;top:256px;width:68px;height:22px;background:#ffc000"></div><div class="a" style="left:669px;top:256px;width:68px;height:22px;background:#ffc000"></div><div class="a" style="left:535px;top:298px;width:68px;height:22px;background:#ffc000"></div><div class="a" style="left:602px;top:298px;width:68px;height:22px;background:#ffc000"></div><div class="a" style="left:669px;top:298px;width:68px;height:22px;background:#ffc000"></div><div class="a" style="left:535px;top:340px;width:68px;height:22px;background:#ffc000"></div><div class="a" style="left:602px;top:340px;width:68px;height:22px;background:#5b9bd5"></div><div class="a" style="left:736px;top:340px;width:68px;height:22px;background:#5b9bd5"></div><div class="a" style="left:736px;top:467px;width:68px;height:22px;background:#ffc000"></div><div class="a" style="left:602px;top:637px;width:68px;height:22px;background:#ffc000"></div><div class="a" style="left:736px;top:637px;width:68px;height:22px;background:#5b9bd5"></div><div class="a" style="left:602px;top:679px;width:68px;height:22px;background:#ffc000"></div><div class="a" style="left:736px;top:679px;width:68px;height:22px;background:#5b9bd5"></div><div class="a" style="left:803px;top:21px;width:68px;height:23px;background:#ff0000"></div><div class="a" style="left:803px;top:86px;width:68px;height:22px;background:#5b9bd5"></div><div class="a" style="left:870px;top:86px;width:68px;height:22px;background:#ffc000"></div><div class="a" style="left:1004px;top:86px;width:68px;height:22px;background:#ffc000"></div><div class="a" style="left:803px;top:128px;width:68px;height:22px;background:#ffc000"></div><div class="a" style="left:870px;top:128px;width:68px;height:22px;background:#ffc000"></div><div class="a" style="left:937px;top:128px;width:68px;height:22px;background:#5b9bd5"></div><div class="a" style="left:1004px;top:128px;width:68px;height:22px;background:#ffc000"></div><div class="a" style="left:803px;top:171px;width:68px;height:23px;background:#ffc000"></div><div class="a" style="left:870px;top:171px;width:68px;height:23px;background:#ffff00"></div><div class="a" style="left:937px;top:171px;width:68px;height:23px;background:#ffc000"></div><div class="a" style="left:870px;top:214px;width:68px;height:22px;background:#ffff00"></div><div class="a" style="left:937px;top:214px;width:68px;height:22px;background:#ffc000"></div><div class="a" style="left:870px;top:256px;width:68px;height:22px;background:#ffc000"></div><div class="a" style="left:937px;top:256px;width:68px;height:22px;background:#ffc000"></div><div class="a" style="left:803px;top:298px;width:68px;height:22px;background:#ffc000"></div><div class="a" style="left:870px;top:298px;width:68px;height:22px;background:#ffc000"></div><div class="a" style="left:937px;top:298px;width:68px;height:22px;background:#ffc000"></div><div class="a" style="left:803px;top:340px;width:68px;height:22px;background:#5b9bd5"></div><div class="a" style="left:870px;top:340px;width:68px;height:22px;background:#ffc000"></div><div class="a" style="left:937px;top:340px;width:68px;height:22px;background:#ffc000"></div><div class="a" style="left:1004px;top:467px;width:68px;height:22px;background:#ffc000"></div><div class="a" style="left:870px;top:637px;width:68px;height:22px;background:#5b9bd5"></div><div class="a" style="left:1004px;top:637px;width:68px;height:22px;background:#ffc000"></div><div class="a" style="left:870px;top:679px;width:68px;height:22px;background:#5b9bd5"></div><div class="a" style="left:1004px;top:679px;width:68px;height:22px;background:#ffc000"></div><div class="a" style="left:1071px;top:43px;width:68px;height:23px;background:#ff0000"></div><div class="a" style="left:1071px;top:86px;width:68px;height:22px;background:#ffc000"></div><div class="a" style="left:1138px;top:86px;width:68px;height:22px;background:#ffc000"></div><div class="a" style="left:1272px;top:86px;width:68px;height:22px;background:#5b9bd5"></div><div class="a" style="left:1071px;top:128px;width:68px;height:22px;background:#ffc000"></div><div class="a" style="left:1138px;top:128px;width:68px;height:22px;background:#5b9bd5"></div><div class="a" style="left:1205px;top:128px;width:68px;height:22px;background:#5b9bd5"></div><div class="a" style="left:1272px;top:128px;width:68px;height:22px;background:#5b9bd5"></div><div class="a" style="left:1071px;top:171px;width:68px;height:23px;background:#5b9bd5"></div><div class="a" style="left:1138px;top:171px;width:68px;height:23px;background:#5b9bd5"></div><div class="a" style="left:1272px;top:171px;width:68px;height:23px;background:#5b9bd5"></div><div class="a" style="left:1138px;top:214px;width:68px;height:22px;background:#7030a0"></div><div class="a" style="left:1272px;top:214px;width:68px;height:22px;background:#5b9bd5"></div><div class="a" style="left:1138px;top:256px;width:68px;height:22px;background:#5b9bd5"></div><div class="a" style="left:1272px;top:256px;width:68px;height:22px;background:#5b9bd5"></div><div class="a" style="left:1071px;top:298px;width:68px;height:22px;background:#ffc000"></div><div class="a" style="left:1138px;top:298px;width:68px;height:22px;background:#5b9bd5"></div><div class="a" style="left:1272px;top:298px;width:68px;height:22px;background:#5b9bd5"></div><div class="a" style="left:1071px;top:340px;width:68px;height:22px;background:#5b9bd5"></div><div class="a" style="left:1138px;top:340px;width:68px;height:22px;background:#5b9bd5"></div><div class="a" style="left:1272px;top:340px;width:68px;height:22px;background:#5b9bd5"></div><div class="a" style="left:1272px;top:467px;width:68px;height:22px;background:#5b9bd5"></div><div class="a" style="left:1138px;top:637px;width:68px;height:22px;background:#ffc000"></div><div class="a" style="left:1272px;top:637px;width:68px;height:22px;background:#5b9bd5"></div><div class="a" style="left:1138px;top:679px;width:68px;height:22px;background:#ffc000"></div><div class="a" style="left:1272px;top:679px;width:68px;height:22px;background:#5b9bd5"></div><div class="a" style="left:1339px;top:86px;width:68px;height:22px;background:#5b9bd5"></div><div class="a" style="left:1406px;top:86px;width:68px;height:22px;background:#ffc000"></div><div class="a" style="left:1540px;top:86px;width:68px;height:22px;background:#ffc000"></div><div class="a" style="left:1339px;top:128px;width:68px;height:22px;background:#ffc000"></div><div class="a" style="left:1406px;top:128px;width:68px;height:22px;background:#5b9bd5"></div><div class="a" style="left:1473px;top:128px;width:68px;height:22px;background:#ffc000"></div><div class="a" style="left:1540px;top:128px;width:68px;height:22px;background:#ffc000"></div><div class="a" style="left:1339px;top:171px;width:68px;height:23px;background:#ffc000"></div><div class="a" style="left:1406px;top:171px;width:68px;height:23px;background:#5b9bd5"></div><div class="a" style="left:1540px;top:171px;width:68px;height:23px;background:#5b9bd5"></div><div class="a" style="left:1406px;top:214px;width:68px;height:22px;background:#5b9bd5"></div><div class="a" style="left:1540px;top:214px;width:68px;height:22px;background:#5b9bd5"></div><div class="a" style="left:1406px;top:256px;width:68px;height:22px;background:#5b9bd5"></div><div class="a" style="left:1540px;top:256px;width:68px;height:22px;background:#5b9bd5"></div><div class="a" style="left:1339px;top:298px;width:68px;height:22px;background:#5b9bd5"></div><div class="a" style="left:1406px;top:298px;width:68px;height:22px;background:#ffc000"></div><div class="a" style="left:1473px;top:298px;width:68px;height:22px;background:#ffc000"></div><div class="a" style="left:1339px;top:340px;width:68px;height:22px;background:#ffc000"></div><div class="a" style="left:1406px;top:340px;width:68px;height:22px;background:#ffc000"></div><div class="a" style="left:1473px;top:340px;width:68px;height:22px;background:#ffc000"></div><div class="a" style="left:1540px;top:467px;width:68px;height:22px;background:#5b9bd5"></div><div class="a" style="left:1406px;top:637px;width:68px;height:22px;background:#5b9bd5"></div><div class="a" style="left:1540px;top:637px;width:68px;height:22px;background:#ffc000"></div><div class="a" style="left:1406px;top:679px;width:68px;height:22px;background:#ffc000"></div><div class="a" style="left:1540px;top:679px;width:68px;height:22px;background:#ffc000"></div><div class="a" style="left:1607px;top:86px;width:68px;height:22px;background:#5b9bd5"></div><div class="a" style="left:1674px;top:86px;width:68px;height:22px;background:#5b9bd5"></div><div class="a" style="left:1808px;top:86px;width:68px;height:22px;background:#ffc000"></div><div class="a" style="left:1607px;top:128px;width:68px;height:22px;background:#ffc000"></div><div class="a" style="left:1674px;top:128px;width:68px;height:22px;background:#5b9bd5"></div><div class="a" style="left:1741px;top:128px;width:68px;height:22px;background:#ffc000"></div><div class="a" style="left:1808px;top:128px;width:68px;height:22px;background:#5b9bd5"></div><div class="a" style="left:1607px;top:171px;width:68px;height:23px;background:#ffc000"></div><div class="a" style="left:1674px;top:171px;width:68px;height:23px;background:#5b9bd5"></div><div class="a" style="left:1808px;top:171px;width:68px;height:23px;background:#5b9bd5"></div><div class="a" style="left:1674px;top:214px;width:68px;height:22px;background:#5b9bd5"></div><div class="a" style="left:1808px;top:214px;width:68px;height:22px;background:#5b9bd5"></div><div class="a" style="left:1674px;top:256px;width:68px;height:22px;background:#ffc000"></div><div class="a" style="left:1741px;top:256px;width:68px;height:22px;background:#ffc000"></div><div class="a" style="left:1607px;top:298px;width:68px;height:22px;background:#ffc000"></div><div class="a" style="left:1674px;top:298px;width:68px;height:22px;background:#ffc000"></div><div class="a" style="left:1741px;top:298px;width:68px;height:22px;background:#ffc000"></div><div class="a" style="left:1607px;top:340px;width:68px;height:22px;background:#ffc000"></div><div class="a" style="left:1674px;top:340px;width:68px;height:22px;background:#ffc000"></div><div class="a" style="left:1741px;top:340px;width:68px;height:22px;background:#ffc000"></div><div class="a" style="left:1808px;top:467px;width:68px;height:22px;background:#ffc000"></div><div class="a" style="left:1674px;top:637px;width:68px;height:22px;background:#ffc000"></div><div class="a" style="left:1808px;top:637px;width:68px;height:22px;background:#5b9bd5"></div><div class="a" style="left:1674px;top:679px;width:68px;height:22px;background:#ffc000"></div><div class="a" style="left:1808px;top:679px;width:68px;height:22px;background:#5b9bd5"></div><div class="a" style="left:0px;top:20px;width:1900px;height:2px;background:#000"></div><div class="a" style="left:0px;top:42px;width:1900px;height:2px;background:#000"></div><div class="a" style="left:0px;top:64px;width:1900px;height:2px;background:#000"></div><div class="a" style="left:266px;top:-1px;width:2px;height:384px;background:#000"></div><div class="a" style="left:266px;top:404px;width:2px;height:191px;background:#000"></div><div class="a" style="left:266px;top:616px;width:2px;height:85px;background:#000"></div><div class="a" style="left:534px;top:-1px;width:2px;height:384px;background:#000"></div><div class="a" style="left:534px;top:404px;width:2px;height:191px;background:#000"></div><div class="a" style="left:534px;top:616px;width:2px;height:85px;background:#000"></div><div class="a" style="left:802px;top:-1px;width:2px;height:384px;background:#000"></div><div class="a" style="left:802px;top:404px;width:2px;height:191px;background:#000"></div><div class="a" style="left:802px;top:616px;width:2px;height:85px;background:#000"></div><div class="a" style="left:1070px;top:-1px;width:2px;height:384px;background:#000"></div><div class="a" style="left:1070px;top:404px;width:2px;height:191px;background:#000"></div><div class="a" style="left:1070px;top:616px;width:2px;height:85px;background:#000"></div><div class="a" style="left:1338px;top:-1px;width:2px;height:384px;background:#000"></div><div class="a" style="left:1338px;top:404px;width:2px;height:191px;background:#000"></div><div class="a" style="left:1338px;top:616px;width:2px;height:85px;background:#000"></div><div class="a" style="left:1606px;top:-1px;width:2px;height:384px;background:#000"></div><div class="a" style="left:1606px;top:404px;width:2px;height:191px;background:#000"></div><div class="a" style="left:1606px;top:616px;width:2px;height:85px;background:#000"></div><div class="a" style="left:132px;top:21px;width:2px;height:44px;background:#000"></div><div class="a" style="left:400px;top:21px;width:2px;height:44px;background:#000"></div><div class="a" style="left:668px;top:21px;width:2px;height:44px;background:#000"></div><div class="a" style="left:936px;top:21px;width:2px;height:44px;background:#000"></div><div class="a" style="left:1204px;top:21px;width:2px;height:44px;background:#000"></div><div class="a" style="left:1472px;top:21px;width:2px;height:44px;background:#000"></div><div class="a" style="left:1740px;top:21px;width:2px;height:44px;background:#000"></div><div class="t tj" style="left:0px;top:4px;width:267px;text-align:center">6<span class="j">月</span>2<span class="j">日</span></div><div class="t" style="left:0px;top:25px;width:66px;text-align:right"><span class="s" style="transform-origin:right">100%</span></div><div class="t" style="left:67px;top:25px;width:66px;text-align:right"><span class="s" style="transform-origin:right">28863.8</span></div><div class="t tj" style="left:0px;top:69px;width:66px;text-align:left"><span class="j">夜間</span>/<span class="j">日経</span></div><div class="t tj" style="left:67px;top:69px;width:66px;text-align:left"><span class="j">ダウ前日比</span></div><div class="t tj" style="left:134px;top:69px;width:66px;text-align:left"><span class="j">円高</span></div><div class="t tj" style="left:201px;top:69px;width:66px;text-align:left">TOP<span class="j">前日比</span></div><div class="t tj" style="left:0px;top:111px;width:66px;text-align:left"><span class="j">日経陽陰</span></div><div class="t tj" style="left:67px;top:111px;width:66px;text-align:left"><span class="j">空売比率</span></div><div class="t tj" style="left:134px;top:111px;width:66px;text-align:left"><span class="j">マザ陽陰</span></div><div class="t tj" style="left:201px;top:111px;width:66px;text-align:left">top<span class="j">陽陰</span></div><div class="t tj" style="left:0px;top:154px;width:66px;text-align:left"><span class="j">前日比</span></div><div class="t tj" style="left:67px;top:154px;width:66px;text-align:left"><span class="j">値上下比</span></div><div class="t tj" style="left:134px;top:154px;width:66px;text-align:left"><span class="j">値上</span></div><div class="t tj" style="left:201px;top:154px;width:66px;text-align:left"><span class="j">値下</span></div><div class="t tj" style="left:67px;top:197px;width:66px;text-align:left"><span class="j">東一前日比</span></div><div class="t tj" style="left:134px;top:197px;width:66px;text-align:left"><span class="j">値上</span></div><div class="t tj" style="left:201px;top:197px;width:66px;text-align:left"><span class="j">値下</span></div><div class="t tj" style="left:67px;top:239px;width:66px;text-align:left"><span class="j">東二前日比</span></div><div class="t tj" style="left:134px;top:239px;width:66px;text-align:left"><span class="j">値上</span></div><div class="t tj" style="left:201px;top:239px;width:66px;text-align:left"><span class="j">値下</span></div><div class="t tj" style="left:0px;top:281px;width:66px;text-align:left">JQ<span class="j">前日比</span></div><div class="t tj" style="left:67px;top:281px;width:66px;text-align:left">jq<span class="j">前日比</span></div><div class="t tj" style="left:134px;top:281px;width:66px;text-align:left"><span class="j">値上</span></div><div class="t tj" style="left:201px;top:281px;width:66px;text-align:left"><span class="j">値下</span></div><div class="t tj" style="left:0px;top:323px;width:66px;text-align:left"><span class="j">マザ前日比</span></div><div class="t tj" style="left:67px;top:323px;width:66px;text-align:left"><span class="j">値上下比</span></div><div class="t tj" style="left:134px;top:323px;width:66px;text-align:left"><span class="j">値上</span></div><div class="t tj" style="left:201px;top:323px;width:66px;text-align:left"><span class="j">値下</span></div><div class="t tj" style="left:0px;top:365px;width:66px;text-align:left"><span class="j">終値</span></div><div class="t tj" style="left:67px;top:365px;width:66px;text-align:left"><span class="j">始値</span></div><div class="t tj" style="left:134px;top:365px;width:66px;text-align:left"><span class="j">高値</span></div><div class="t tj" style="left:201px;top:365px;width:66px;text-align:left"><span class="j">安値</span></div><div class="t tj" style="left:0px;top:408px;width:66px;text-align:left"><span class="j">マザ終値</span></div><div class="t tj" style="left:67px;top:408px;width:66px;text-align:left"><span class="j">始値</span></div><div class="t tj" style="left:134px;top:408px;width:66px;text-align:left">TOP<span class="j">終値</span></div><div class="t tj" style="left:201px;top:408px;width:66px;text-align:left"><span class="j">始値</span></div><div class="t tj" style="left:0px;top:492px;width:66px;text-align:left"><span class="j">先物夜間</span></div><div class="t tj" style="left:67px;top:492px;width:66px;text-align:left"><span class="j">始値</span></div><div class="t tj" style="left:134px;top:492px;width:66px;text-align:left"><span class="j">高値</span></div><div class="t tj" style="left:201px;top:492px;width:66px;text-align:left"><span class="j">安値</span></div><div class="t tj" style="left:0px;top:534px;width:66px;text-align:left"><span class="j">ダウ終値</span></div><div class="t tj" style="left:67px;top:534px;width:66px;text-align:left"><span class="j">始値</span></div><div class="t tj" style="left:134px;top:534px;width:66px;text-align:left"><span class="j">高値</span></div><div class="t tj" style="left:201px;top:534px;width:66px;text-align:left"><span class="j">安値</span></div><div class="t tj" style="left:0px;top:577px;width:66px;text-align:left"><span class="j">為替終値</span></div><div class="t tj" style="left:67px;top:577px;width:66px;text-align:left"><span class="j">始値</span></div><div class="t tj" style="left:134px;top:577px;width:66px;text-align:left"><span class="j">高値</span></div><div class="t tj" style="left:201px;top:577px;width:66px;text-align:left"><span class="j">安値</span></div><div class="t tj" style="left:0px;top:662px;width:66px;text-align:left"><span class="j">買い</span></div><div class="t tj" style="left:134px;top:662px;width:66px;text-align:left"><span class="j">売り</span></div><div class="t" style="left:0px;top:89px;width:66px;text-align:right"><span class="s" style="transform-origin:right">93.86</span></div><div class="t" style="left:67px;top:89px;width:66px;text-align:right"><span class="s" style="transform-origin:right">-46</span></div><div class="t" style="left:134px;top:89px;width:66px;text-align:right"><span class="s" style="transform-origin:right">0</span></div><div class="t" style="left:201px;top:89px;width:66px;text-align:right"><span class="s" style="transform-origin:right">16.15</span></div><div class="t tj" style="left:0px;top:132px;width:66px;text-align:left"><span class="j">陽</span></div><div class="t" style="left:67px;top:131px;width:66px;text-align:right"><span class="s" style="transform-origin:right">41%</span></div><div class="t tj" style="left:134px;top:132px;width:66px;text-align:left"><span class="j">陰</span></div><div class="t tj" style="left:201px;top:132px;width:66px;text-align:left"><span class="j">陽</span></div><div class="t" style="left:0px;top:175px;width:66px;text-align:right"><span class="s" style="transform-origin:right">131.8</span></div><div class="t" style="left:67px;top:175px;width:66px;text-align:right"><span class="s" style="transform-origin:right">57%</span></div><div class="t" style="left:134px;top:175px;width:66px;text-align:right"><span class="s" style="transform-origin:right">2484</span></div><div class="t" style="left:201px;top:175px;width:66px;text-align:right"><span class="s" style="transform-origin:right">1844</span></div><div class="t" style="left:67px;top:217px;width:66px;text-align:left"><span class="s" style="transform-origin:left">59%</span></div><div class="t" style="left:134px;top:217px;width:66px;text-align:left"><span class="s" style="transform-origin:left">1338</span></div><div class="t" style="left:201px;top:217px;width:66px;text-align:left"><span class="s" style="transform-origin:left">931</span></div><div class="t" style="left:67px;top:259px;width:66px;text-align:left"><span class="s" style="transform-origin:left">55%</span></div><div class="t" style="left:134px;top:259px;width:66px;text-align:left"><span class="s" style="transform-origin:left">262</span></div><div class="t" style="left:201px;top:259px;width:66px;text-align:left"><span class="s" style="transform-origin:left">216</span></div><div class="t" style="left:0px;top:301px;width:66px;text-align:left"><span class="s" style="transform-origin:left">1.01</span></div><div class="t" style="left:67px;top:301px;width:66px;text-align:left"><span class="s" style="transform-origin:left">53%</span></div><div class="t" style="left:134px;top:301px;width:66px;text-align:left"><span class="s" style="transform-origin:left">390</span></div><div class="t" style="left:201px;top:301px;width:66px;text-align:left"><span class="s" style="transform-origin:left">350</span></div><div class="t" style="left:0px;top:343px;width:66px;text-align:left"><span class="s" style="transform-origin:left">-5.94</span></div><div class="t" style="left:67px;top:343px;width:66px;text-align:left"><span class="s" style="transform-origin:left">46%</span></div><div class="t" style="left:134px;top:343px;width:66px;text-align:left"><span class="s" style="transform-origin:left">166</span></div><div class="t" style="left:201px;top:343px;width:66px;text-align:left"><span class="s" style="transform-origin:left">193</span></div><div class="t" style="left:0px;top:386px;width:66px;text-align:right"><span class="s" style="transform-origin:right">28,946.14</span></div><div class="t" style="left:67px;top:386px;width:66px;text-align:right"><span class="s" style="transform-origin:right">28,730.81</span></div><div class="t" style="left:134px;top:386px;width:66px;text-align:right"><span class="s" style="transform-origin:right">29,003.55</span></div><div class="t" style="left:201px;top:386px;width:66px;text-align:right"><span class="s" style="transform-origin:right">28,565.83</span></div><div class="t" style="left:0px;top:428px;width:66px;text-align:right"><span class="s" style="transform-origin:right">1,135.80</span></div><div class="t" style="left:134px;top:428px;width:66px;text-align:right"><span class="s" style="transform-origin:right">1,942.33</span></div><div class="t tj" style="left:134px;top:450px;width:133px;text-align:left"><span class="j">ジャスダック</span></div><div class="t" style="left:134px;top:470px;width:66px;text-align:right"><span class="s" style="transform-origin:right">3897.77</span></div><div class="t tj" style="left:201px;top:471px;width:66px;text-align:left"><span class="j">陰</span></div><div class="t" style="left:0px;top:512px;width:66px;text-align:right"><span class="s" style="transform-origin:right">29040</span></div><div class="t" style="left:0px;top:554px;width:66px;text-align:right"><span class="s" style="transform-origin:right">34,529.00</span></div><div class="t" style="left:0px;top:598px;width:66px;text-align:right"><span class="s" style="transform-origin:right">108.78</span></div><div class="t" style="left:67px;top:598px;width:66px;text-align:right"><span class="s" style="transform-origin:right">108.79</span></div><div class="t" style="left:134px;top:598px;width:66px;text-align:right"><span class="s" style="transform-origin:right">108.9</span></div><div class="t" style="left:201px;top:598px;width:66px;text-align:right"><span class="s" style="transform-origin:right">108.69</span></div><div class="t tj" style="left:0px;top:641px;width:66px;text-align:left"><span class="j">前日比</span></div><div class="t" style="left:67px;top:640px;width:66px;text-align:left"><span class="s" style="transform-origin:left">-2</span></div><div class="t tj" style="left:134px;top:641px;width:66px;text-align:left"><span class="j">前日比</span></div><div class="t" style="left:201px;top:640px;width:66px;text-align:left"><span class="s" style="transform-origin:left">-6</span></div><div class="t" style="left:0px;top:682px;width:66px;text-align:left"><span class="s" style="transform-origin:left">400</span></div><div class="t" style="left:67px;top:682px;width:66px;text-align:left"><span class="s" style="transform-origin:left">-3</span></div><div class="t" style="left:134px;top:682px;width:66px;text-align:left"><span class="s" style="transform-origin:left">830</span></div><div class="t" style="left:201px;top:682px;width:66px;text-align:left"><span class="s" style="transform-origin:left">30</span></div><div class="t tj" style="left:268px;top:4px;width:267px;text-align:center">6<span class="j">月</span>1<span class="j">日</span></div><div class="t" style="left:268px;top:25px;width:66px;text-align:right"><span class="s" style="transform-origin:right">100%</span></div><div class="t" style="left:335px;top:25px;width:66px;text-align:right"><span class="s" style="transform-origin:right">28803.01</span></div><div class="t" style="left:268px;top:47px;width:66px;text-align:right"><span class="s" style="transform-origin:right">100%</span></div><div class="t" style="left:335px;top:47px;width:66px;text-align:right"><span class="s" style="transform-origin:right">28,946.14</span></div><div class="t tj" style="left:268px;top:69px;width:66px;text-align:left"><span class="j">夜間</span>/<span class="j">日経</span></div><div class="t tj" style="left:335px;top:69px;width:66px;text-align:left"><span class="j">ダウ前日比</span></div><div class="t tj" style="left:402px;top:69px;width:66px;text-align:left"><span class="j">円高</span></div><div class="t tj" style="left:469px;top:69px;width:66px;text-align:left">TOP<span class="j">前日比</span></div><div class="t tj" style="left:268px;top:111px;width:66px;text-align:left"><span class="j">日経陽陰</span></div><div class="t tj" style="left:335px;top:111px;width:66px;text-align:left"><span class="j">空売比率</span></div><div class="t tj" style="left:402px;top:111px;width:66px;text-align:left"><span class="j">マザ陽陰</span></div><div class="t tj" style="left:469px;top:111px;width:66px;text-align:left">top<span class="j">陽陰</span></div><div class="t tj" style="left:268px;top:154px;width:66px;text-align:left"><span class="j">前日比</span></div><div class="t tj" style="left:335px;top:154px;width:66px;text-align:left"><span class="j">値上下比</span></div><div class="t tj" style="left:402px;top:154px;width:66px;text-align:left"><span class="j">値上</span></div><div class="t tj" style="left:469px;top:154px;width:66px;text-align:left"><span class="j">値下</span></div><div class="t tj" style="left:335px;top:197px;width:66px;text-align:left"><span class="j">東一前日比</span></div><div class="t tj" style="left:402px;top:197px;width:66px;text-align:left"><span class="j">値上</span></div><div class="t tj" style="left:469px;top:197px;width:66px;text-align:left"><span class="j">値下</span></div><div class="t tj" style="left:335px;top:239px;width:66px;text-align:left"><span class="j">東二前日比</span></div><div class="t tj" style="left:402px;top:239px;width:66px;text-align:left"><span class="j">値上</span></div><div class="t tj" style="left:469px;top:239px;width:66px;text-align:left"><span class="j">値下</span></div><div class="t tj" style="left:268px;top:281px;width:66px;text-align:left">JQ<span class="j">前日比</span></div><div class="t tj" style="left:335px;top:281px;width:66px;text-align:left">jq<span class="j">前日比</span></div><div class="t tj" style="left:402px;top:281px;width:66px;text-align:left"><span class="j">値上</span></div><div class="t tj" style="left:469px;top:281px;width:66px;text-align:left"><span class="j">値下</span></div><div class="t tj" style="left:268px;top:323px;width:66px;text-align:left"><span class="j">マザ前日比</span></div><div class="t tj" style="left:335px;top:323px;width:66px;text-align:left"><span class="j">値上下比</span></div><div class="t tj" style="left:402px;top:323px;width:66px;text-align:left"><span class="j">値上</span></div><div class="t tj" style="left:469px;top:323px;width:66px;text-align:left"><span class="j">値下</span></div><div class="t tj" style="left:268px;top:365px;width:66px;text-align:left"><span class="j">終値</span></div><div class="t tj" style="left:335px;top:365px;width:66px;text-align:left"><span class="j">始値</span></div><div class="t tj" style="left:402px;top:365px;width:66px;text-align:left"><span class="j">高値</span></div><div class="t tj" style="left:469px;top:365px;width:66px;text-align:left"><span class="j">安値</span></div><div class="t tj" style="left:268px;top:408px;width:66px;text-align:left"><span class="j">マザ終値</span></div><div class="t tj" style="left:335px;top:408px;width:66px;text-align:left"><span class="j">始値</span></div><div class="t tj" style="left:402px;top:408px;width:66px;text-align:left">TOP<span class="j">終値</span></div><div class="t tj" style="left:469px;top:408px;width:66px;text-align:left"><span class="j">始値</span></div><div class="t tj" style="left:268px;top:492px;width:66px;text-align:left"><span class="j">先物夜間</span></div><div class="t tj" style="left:335px;top:492px;width:66px;text-align:left"><span class="j">始値</span></div><div class="t tj" style="left:402px;top:492px;width:66px;text-align:left"><span class="j">高値</span></div><div class="t tj" style="left:469px;top:492px;width:66px;text-align:left"><span class="j">安値</span></div><div class="t tj" style="left:268px;top:534px;width:66px;text-align:left"><span class="j">ダウ終値</span></div><div class="t tj" style="left:335px;top:534px;width:66px;text-align:left"><span class="j">始値</span></div><div class="t tj" style="left:402px;top:534px;width:66px;text-align:left"><span class="j">高値</span></div><div class="t tj" style="left:469px;top:534px;width:66px;text-align:left"><span class="j">安値</span></div><div class="t tj" style="left:268px;top:577px;width:66px;text-align:left"><span class="j">為替終値</span></div><div class="t tj" style="left:335px;top:577px;width:66px;text-align:left"><span class="j">始値</span></div><div class="t tj" style="left:402px;top:577px;width:66px;text-align:left"><span class="j">高値</span></div><div class="t tj" style="left:469px;top:577px;width:66px;text-align:left"><span class="j">安値</span></div><div class="t tj" style="left:268px;top:662px;width:66px;text-align:left"><span class="j">買い</span></div><div class="t tj" style="left:402px;top:662px;width:66px;text-align:left"><span class="j">売り</span></div><div class="t" style="left:268px;top:89px;width:66px;text-align:right"><span class="s" style="transform-origin:right">-54.34</span></div><div class="t" style="left:335px;top:89px;width:66px;text-align:right"><span class="s" style="transform-origin:right">46</span></div><div class="t" style="left:402px;top:89px;width:66px;text-align:right"><span class="s" style="transform-origin:right">0</span></div><div class="t" style="left:469px;top:89px;width:66px;text-align:right"><span class="s" style="transform-origin:right">3.2</span></div><div class="t tj" style="left:268px;top:132px;width:66px;text-align:left"><span class="j">陰</span></div><div class="t" style="left:335px;top:131px;width:66px;text-align:right"><span class="s" style="transform-origin:right">41%</span></div><div class="t tj" style="left:402px;top:132px;width:66px;text-align:left"><span class="j">陰</span></div><div class="t tj" style="left:469px;top:132px;width:66px;text-align:left"><span class="j">陰</span></div><div class="t" style="left:268px;top:175px;width:66px;text-align:right"><span class="s" style="transform-origin:right">-45.74</span></div><div class="t" style="left:335px;top:175px;width:66px;text-align:right"><span class="s" style="transform-origin:right">57%</span></div><div class="t" style="left:402px;top:175px;width:66px;text-align:right"><span class="s" style="transform-origin:right">2443</span></div><div class="t" style="left:469px;top:175px;width:66px;text-align:right"><span class="s" style="transform-origin:right">1853</span></div><div class="t" style="left:335px;top:217px;width:66px;text-align:left"><span class="s" style="transform-origin:left">64%</span></div><div class="t" style="left:402px;top:217px;width:66px;text-align:left"><span class="s" style="transform-origin:left">1440</span></div><div class="t" style="left:469px;top:217px;width:66px;text-align:left"><span class="s" style="transform-origin:left">822</span></div><div class="t" style="left:335px;top:259px;width:66px;text-align:left"><span class="s" style="transform-origin:left">53%</span></div><div class="t" style="left:402px;top:259px;width:66px;text-align:left"><span class="s" style="transform-origin:left">252</span></div><div class="t" style="left:469px;top:259px;width:66px;text-align:left"><span class="s" style="transform-origin:left">224</span></div><div class="t" style="left:268px;top:301px;width:66px;text-align:left"><span class="s" style="transform-origin:left">5.99</span></div><div class="t" style="left:335px;top:301px;width:66px;text-align:left"><span class="s" style="transform-origin:left">55%</span></div><div class="t" style="left:402px;top:301px;width:66px;text-align:left"><span class="s" style="transform-origin:left">389</span></div><div class="t" style="left:469px;top:301px;width:66px;text-align:left"><span class="s" style="transform-origin:left">322</span></div><div class="t" style="left:268px;top:343px;width:66px;text-align:left"><span class="s" style="transform-origin:left">-8.32</span></div><div class="t" style="left:335px;top:343px;width:66px;text-align:left"><span class="s" style="transform-origin:left">39%</span></div><div class="t" style="left:402px;top:343px;width:66px;text-align:left"><span class="s" style="transform-origin:left">141</span></div><div class="t" style="left:469px;top:343px;width:66px;text-align:left"><span class="s" style="transform-origin:left">216</span></div><div class="t" style="left:268px;top:386px;width:66px;text-align:right"><span class="s" style="transform-origin:right">28,814.34</span></div><div class="t" style="left:335px;top:386px;width:66px;text-align:right"><span class="s" style="transform-origin:right">28,998.65</span></div><div class="t" style="left:402px;top:386px;width:66px;text-align:right"><span class="s" style="transform-origin:right">29,075.47</span></div><div class="t" style="left:469px;top:386px;width:66px;text-align:right"><span class="s" style="transform-origin:right">28,611.25</span></div><div class="t" style="left:268px;top:428px;width:66px;text-align:right"><span class="s" style="transform-origin:right">1,141.74</span></div><div class="t" style="left:402px;top:428px;width:66px;text-align:right"><span class="s" style="transform-origin:right">1,926.18</span></div><div class="t tj" style="left:268px;top:450px;width:66px;text-align:left"><span class="j">新</span></div><div class="t tj" style="left:402px;top:450px;width:133px;text-align:left"><span class="j">ジャスダック</span></div><div class="t" style="left:402px;top:470px;width:66px;text-align:right"><span class="s" style="transform-origin:right">3896.76</span></div><div class="t tj" style="left:469px;top:471px;width:66px;text-align:left"><span class="j">陰</span></div><div class="t" style="left:268px;top:512px;width:66px;text-align:right"><span class="s" style="transform-origin:right">28760</span></div><div class="t" style="left:268px;top:554px;width:66px;text-align:right"><span class="s" style="transform-origin:right">34,575.00</span></div><div class="t" style="left:268px;top:598px;width:66px;text-align:right"><span class="s" style="transform-origin:right">108.78</span></div><div class="t" style="left:335px;top:598px;width:66px;text-align:right"><span class="s" style="transform-origin:right">108.79</span></div><div class="t" style="left:402px;top:598px;width:66px;text-align:right"><span class="s" style="transform-origin:right">108.9</span></div><div class="t" style="left:469px;top:598px;width:66px;text-align:right"><span class="s" style="transform-origin:right">108.69</span></div><div class="t tj" style="left:268px;top:641px;width:66px;text-align:left"><span class="j">前日比</span></div><div class="t" style="left:335px;top:640px;width:66px;text-align:left"><span class="s" style="transform-origin:left">-23</span></div><div class="t tj" style="left:402px;top:641px;width:66px;text-align:left"><span class="j">前日比</span></div><div class="t" style="left:469px;top:640px;width:66px;text-align:left"><span class="s" style="transform-origin:left">72</span></div><div class="t" style="left:268px;top:682px;width:66px;text-align:left"><span class="s" style="transform-origin:left">403</span></div><div class="t" style="left:335px;top:682px;width:66px;text-align:left"><span class="s" style="transform-origin:left">-1</span></div><div class="t" style="left:402px;top:682px;width:66px;text-align:left"><span class="s" style="transform-origin:left">800</span></div><div class="t" style="left:469px;top:682px;width:66px;text-align:left"><span class="s" style="transform-origin:left">36</span></div><div class="t tj" style="left:536px;top:4px;width:267px;text-align:center">5<span class="j">月</span>31<span class="j">日</span></div><div class="t" style="left:536px;top:25px;width:66px;text-align:right"><span class="s" style="transform-origin:right">100%</span></div><div class="t" style="left:603px;top:25px;width:66px;text-align:right"><span class="s" style="transform-origin:right">28750.93</span></div><div class="t" style="left:536px;top:47px;width:66px;text-align:right"><span class="s" style="transform-origin:right">100%</span></div><div class="t" style="left:603px;top:47px;width:66px;text-align:right"><span class="s" style="transform-origin:right">28,814.34</span></div><div class="t tj" style="left:536px;top:69px;width:66px;text-align:left"><span class="j">夜間</span>/<span class="j">日経</span></div><div class="t tj" style="left:603px;top:69px;width:66px;text-align:left"><span class="j">ダウ前日比</span></div><div class="t tj" style="left:670px;top:69px;width:66px;text-align:left"><span class="j">円高</span></div><div class="t tj" style="left:737px;top:69px;width:66px;text-align:left">TOP<span class="j">前日比</span></div><div class="t tj" style="left:536px;top:111px;width:66px;text-align:left"><span class="j">日経陽陰</span></div><div class="t tj" style="left:603px;top:111px;width:66px;text-align:left"><span class="j">空売比率</span></div><div class="t tj" style="left:670px;top:111px;width:66px;text-align:left"><span class="j">マザ陽陰</span></div><div class="t tj" style="left:737px;top:111px;width:66px;text-align:left">top<span class="j">陽陰</span></div><div class="t tj" style="left:536px;top:154px;width:66px;text-align:left"><span class="j">前日比</span></div><div class="t tj" style="left:603px;top:154px;width:66px;text-align:left"><span class="j">値上下比</span></div><div class="t tj" style="left:670px;top:154px;width:66px;text-align:left"><span class="j">値上</span></div><div class="t tj" style="left:737px;top:154px;width:66px;text-align:left"><span class="j">値下</span></div><div class="t tj" style="left:603px;top:197px;width:66px;text-align:left"><span class="j">東一前日比</span></div><div class="t tj" style="left:670px;top:197px;width:66px;text-align:left"><span class="j">値上</span></div><div class="t tj" style="left:737px;top:197px;width:66px;text-align:left"><span class="j">値下</span></div><div class="t tj" style="left:603px;top:239px;width:66px;text-align:left"><span class="j">東二前日比</span></div><div class="t tj" style="left:670px;top:239px;width:66px;text-align:left"><span class="j">値上</span></div><div class="t tj" style="left:737px;top:239px;width:66px;text-align:left"><span class="j">値下</span></div><div class="t tj" style="left:536px;top:281px;width:66px;text-align:left">JQ<span class="j">前日比</span></div><div class="t tj" style="left:603px;top:281px;width:66px;text-align:left">jq<span class="j">前日比</span></div><div class="t tj" style="left:670px;top:281px;width:66px;text-align:left"><span class="j">値上</span></div><div class="t tj" style="left:737px;top:281px;width:66px;text-align:left"><span class="j">値下</span></div><div class="t tj" style="left:536px;top:323px;width:66px;text-align:left"><span class="j">マザ前日比</span></div><div class="t tj" style="left:603px;top:323px;width:66px;text-align:left"><span class="j">値上下比</span></div><div class="t tj" style="left:670px;top:323px;width:66px;text-align:left"><span class="j">値上</span></div><div class="t tj" style="left:737px;top:323px;width:66px;text-align:left"><span class="j">値下</span></div><div class="t tj" style="left:536px;top:365px;width:66px;text-align:left"><span class="j">終値</span></div><div class="t tj" style="left:603px;top:365px;width:66px;text-align:left"><span class="j">始値</span></div><div class="t tj" style="left:670px;top:365px;width:66px;text-align:left"><span class="j">高値</span></div><div class="t tj" style="left:737px;top:365px;width:66px;text-align:left"><span class="j">安値</span></div><div class="t tj" style="left:536px;top:408px;width:66px;text-align:left"><span class="j">マザ終値</span></div><div class="t tj" style="left:603px;top:408px;width:66px;text-align:left"><span class="j">始値</span></div><div class="t tj" style="left:670px;top:408px;width:66px;text-align:left">TOP<span class="j">終値</span></div><div class="t tj" style="left:737px;top:408px;width:66px;text-align:left"><span class="j">始値</span></div><div class="t tj" style="left:536px;top:492px;width:66px;text-align:left"><span class="j">先物夜間</span></div><div class="t tj" style="left:603px;top:492px;width:66px;text-align:left"><span class="j">始値</span></div><div class="t tj" style="left:670px;top:492px;width:66px;text-align:left"><span class="j">高値</span></div><div class="t tj" style="left:737px;top:492px;width:66px;text-align:left"><span class="j">安値</span></div><div class="t tj" style="left:536px;top:534px;width:66px;text-align:left"><span class="j">ダウ終値</span></div><div class="t tj" style="left:603px;top:534px;width:66px;text-align:left"><span class="j">始値</span></div><div class="t tj" style="left:670px;top:534px;width:66px;text-align:left"><span class="j">高値</span></div><div class="t tj" style="left:737px;top:534px;width:66px;text-align:left"><span class="j">安値</span></div><div class="t tj" style="left:536px;top:577px;width:66px;text-align:left"><span class="j">為替終値</span></div><div class="t tj" style="left:603px;top:577px;width:66px;text-align:left"><span class="j">始値</span></div><div class="t tj" style="left:670px;top:577px;width:66px;text-align:left"><span class="j">高値</span></div><div class="t tj" style="left:737px;top:577px;width:66px;text-align:left"><span class="j">安値</span></div><div class="t tj" style="left:536px;top:662px;width:66px;text-align:left"><span class="j">買い</span></div><div class="t tj" style="left:670px;top:662px;width:66px;text-align:left"><span class="j">売り</span></div><div class="t" style="left:536px;top:89px;width:66px;text-align:right"><span class="s" style="transform-origin:right">69.92</span></div><div class="t" style="left:603px;top:89px;width:66px;text-align:right"><span class="s" style="transform-origin:right">0</span></div><div class="t" style="left:670px;top:89px;width:66px;text-align:right"><span class="s" style="transform-origin:right">0</span></div><div class="t" style="left:737px;top:89px;width:66px;text-align:right"><span class="s" style="transform-origin:right">-24.46</span></div><div class="t tj" style="left:536px;top:132px;width:66px;text-align:left"><span class="j">陰</span></div><div class="t" style="left:603px;top:131px;width:66px;text-align:right"><span class="s" style="transform-origin:right">44%</span></div><div class="t tj" style="left:670px;top:132px;width:66px;text-align:left"><span class="j">陽</span></div><div class="t tj" style="left:737px;top:132px;width:66px;text-align:left"><span class="j">陰</span></div><div class="t" style="left:536px;top:175px;width:66px;text-align:right"><span class="s" style="transform-origin:right">-289.33</span></div><div class="t" style="left:603px;top:175px;width:66px;text-align:right"><span class="s" style="transform-origin:right">35%</span></div><div class="t" style="left:670px;top:175px;width:66px;text-align:right"><span class="s" style="transform-origin:right">1550</span></div><div class="t" style="left:737px;top:175px;width:66px;text-align:right"><span class="s" style="transform-origin:right">2819</span></div><div class="t" style="left:603px;top:217px;width:66px;text-align:left"><span class="s" style="transform-origin:left">22%</span></div><div class="t" style="left:670px;top:217px;width:66px;text-align:left"><span class="s" style="transform-origin:left">501</span></div><div class="t" style="left:737px;top:217px;width:66px;text-align:left"><span class="s" style="transform-origin:left">1800</span></div><div class="t" style="left:603px;top:259px;width:66px;text-align:left"><span class="s" style="transform-origin:left">53%</span></div><div class="t" style="left:670px;top:259px;width:66px;text-align:left"><span class="s" style="transform-origin:left">255</span></div><div class="t" style="left:737px;top:259px;width:66px;text-align:left"><span class="s" style="transform-origin:left">226</span></div><div class="t" style="left:536px;top:301px;width:66px;text-align:left"><span class="s" style="transform-origin:left">8.12</span></div><div class="t" style="left:603px;top:301px;width:66px;text-align:left"><span class="s" style="transform-origin:left">56%</span></div><div class="t" style="left:670px;top:301px;width:66px;text-align:left"><span class="s" style="transform-origin:left">411</span></div><div class="t" style="left:737px;top:301px;width:66px;text-align:left"><span class="s" style="transform-origin:left">329</span></div><div class="t" style="left:536px;top:343px;width:66px;text-align:left"><span class="s" style="transform-origin:left">4.87</span></div><div class="t" style="left:603px;top:343px;width:66px;text-align:left"><span class="s" style="transform-origin:left">42%</span></div><div class="t" style="left:670px;top:343px;width:66px;text-align:left"><span class="s" style="transform-origin:left">151</span></div><div class="t" style="left:737px;top:343px;width:66px;text-align:left"><span class="s" style="transform-origin:left">210</span></div><div class="t" style="left:536px;top:386px;width:66px;text-align:right"><span class="s" style="transform-origin:right">28,860.08</span></div><div class="t" style="left:603px;top:386px;width:66px;text-align:right"><span class="s" style="transform-origin:right">29,019.45</span></div><div class="t" style="left:670px;top:386px;width:66px;text-align:right"><span class="s" style="transform-origin:right">29,147.71</span></div><div class="t" style="left:737px;top:386px;width:66px;text-align:right"><span class="s" style="transform-origin:right">28,791.60</span></div><div class="t" style="left:536px;top:428px;width:66px;text-align:right"><span class="s" style="transform-origin:right">1,150.06</span></div><div class="t" style="left:670px;top:428px;width:66px;text-align:right"><span class="s" style="transform-origin:right">1,922.98</span></div><div class="t tj" style="left:603px;top:450px;width:66px;text-align:left"><span class="j">下降</span></div><div class="t tj" style="left:670px;top:450px;width:133px;text-align:left"><span class="j">ジャスダック</span></div><div class="t tj" style="left:536px;top:471px;width:66px;text-align:left"><span class="j">新</span></div><div class="t" style="left:670px;top:470px;width:66px;text-align:right"><span class="s" style="transform-origin:right">3890.77</span></div><div class="t tj" style="left:737px;top:471px;width:66px;text-align:left"><span class="j">陽</span></div><div class="t" style="left:536px;top:512px;width:66px;text-align:right"><span class="s" style="transform-origin:right">28930</span></div><div class="t" style="left:536px;top:554px;width:66px;text-align:right"><span class="s" style="transform-origin:right">34,529.00</span></div><div class="t" style="left:536px;top:598px;width:66px;text-align:right"><span class="s" style="transform-origin:right">108.78</span></div><div class="t" style="left:603px;top:598px;width:66px;text-align:right"><span class="s" style="transform-origin:right">108.79</span></div><div class="t" style="left:670px;top:598px;width:66px;text-align:right"><span class="s" style="transform-origin:right">108.9</span></div><div class="t" style="left:737px;top:598px;width:66px;text-align:right"><span class="s" style="transform-origin:right">108.69</span></div><div class="t tj" style="left:536px;top:641px;width:66px;text-align:left"><span class="j">前日比</span></div><div class="t" style="left:603px;top:640px;width:66px;text-align:left"><span class="s" style="transform-origin:left">46</span></div><div class="t tj" style="left:670px;top:641px;width:66px;text-align:left"><span class="j">前日比</span></div><div class="t" style="left:737px;top:640px;width:66px;text-align:left"><span class="s" style="transform-origin:left">-92</span></div><div class="t" style="left:536px;top:682px;width:66px;text-align:left"><span class="s" style="transform-origin:left">404</span></div><div class="t" style="left:603px;top:682px;width:66px;text-align:left"><span class="s" style="transform-origin:left">22</span></div><div class="t" style="left:670px;top:682px;width:66px;text-align:left"><span class="s" style="transform-origin:left">764</span></div><div class="t" style="left:737px;top:682px;width:66px;text-align:left"><span class="s" style="transform-origin:left">-36</span></div><div class="t tj" style="left:804px;top:4px;width:267px;text-align:center">5<span class="j">月</span>28<span class="j">日</span></div><div class="t" style="left:804px;top:25px;width:66px;text-align:right"><span class="s" style="transform-origin:right">102%</span></div><div class="t" style="left:871px;top:25px;width:66px;text-align:right"><span class="s" style="transform-origin:right">28651.84</span></div><div class="t" style="left:804px;top:47px;width:66px;text-align:right"><span class="s" style="transform-origin:right">101%</span></div><div class="t" style="left:871px;top:47px;width:66px;text-align:right"><span class="s" style="transform-origin:right">28,860.08</span></div><div class="t tj" style="left:804px;top:69px;width:66px;text-align:left"><span class="j">夜間</span>/<span class="j">日経</span></div><div class="t tj" style="left:871px;top:69px;width:66px;text-align:left"><span class="j">ダウ前日比</span></div><div class="t tj" style="left:938px;top:69px;width:66px;text-align:left"><span class="j">円高</span></div><div class="t tj" style="left:1005px;top:69px;width:66px;text-align:left">TOP<span class="j">前日比</span></div><div class="t tj" style="left:804px;top:111px;width:66px;text-align:left"><span class="j">日経陽陰</span></div><div class="t tj" style="left:871px;top:111px;width:66px;text-align:left"><span class="j">空売比率</span></div><div class="t tj" style="left:938px;top:111px;width:66px;text-align:left"><span class="j">マザ陽陰</span></div><div class="t tj" style="left:1005px;top:111px;width:66px;text-align:left">top<span class="j">陽陰</span></div><div class="t tj" style="left:804px;top:154px;width:66px;text-align:left"><span class="j">前日比</span></div><div class="t tj" style="left:871px;top:154px;width:66px;text-align:left"><span class="j">値上下比</span></div><div class="t tj" style="left:938px;top:154px;width:66px;text-align:left"><span class="j">値上</span></div><div class="t tj" style="left:1005px;top:154px;width:66px;text-align:left"><span class="j">値下</span></div><div class="t tj" style="left:871px;top:197px;width:66px;text-align:left"><span class="j">東一前日比</span></div><div class="t tj" style="left:938px;top:197px;width:66px;text-align:left"><span class="j">値上</span></div><div class="t tj" style="left:1005px;top:197px;width:66px;text-align:left"><span class="j">値下</span></div><div class="t tj" style="left:871px;top:239px;width:66px;text-align:left"><span class="j">東二前日比</span></div><div class="t tj" style="left:938px;top:239px;width:66px;text-align:left"><span class="j">値上</span></div><div class="t tj" style="left:1005px;top:239px;width:66px;text-align:left"><span class="j">値下</span></div><div class="t tj" style="left:804px;top:281px;width:66px;text-align:left">JQ<span class="j">前日比</span></div><div class="t tj" style="left:871px;top:281px;width:66px;text-align:left">jq<span class="j">前日比</span></div><div class="t tj" style="left:938px;top:281px;width:66px;text-align:left"><span class="j">値上</span></div><div class="t tj" style="left:1005px;top:281px;width:66px;text-align:left"><span class="j">値下</span></div><div class="t tj" style="left:804px;top:323px;width:66px;text-align:left"><span class="j">マザ前日比</span></div><div class="t tj" style="left:871px;top:323px;width:66px;text-align:left"><span class="j">値上下比</span></div><div class="t tj" style="left:938px;top:323px;width:66px;text-align:left"><span class="j">値上</span></div><div class="t tj" style="left:1005px;top:323px;width:66px;text-align:left"><span class="j">値下</span></div><div class="t tj" style="left:804px;top:365px;width:66px;text-align:left"><span class="j">終値</span></div><div class="t tj" style="left:871px;top:365px;width:66px;text-align:left"><span class="j">始値</span></div><div class="t tj" style="left:938px;top:365px;width:66px;text-align:left"><span class="j">高値</span></div><div class="t tj" style="left:1005px;top:365px;width:66px;text-align:left"><span class="j">安値</span></div><div class="t tj" style="left:804px;top:408px;width:66px;text-align:left"><span class="j">マザ終値</span></div><div class="t tj" style="left:871px;top:408px;width:66px;text-align:left"><span class="j">始値</span></div><div class="t tj" style="left:938px;top:408px;width:66px;text-align:left">TOP<span class="j">終値</span></div><div class="t tj" style="left:1005px;top:408px;width:66px;text-align:left"><span class="j">始値</span></div><div class="t tj" style="left:804px;top:492px;width:66px;text-align:left"><span class="j">先物夜間</span></div><div class="t tj" style="left:871px;top:492px;width:66px;text-align:left"><span class="j">始値</span></div><div class="t tj" style="left:938px;top:492px;width:66px;text-align:left"><span class="j">高値</span></div><div class="t tj" style="left:1005px;top:492px;width:66px;text-align:left"><span class="j">安値</span></div><div class="t tj" style="left:804px;top:534px;width:66px;text-align:left"><span class="j">ダウ終値</span></div><div class="t tj" style="left:871px;top:534px;width:66px;text-align:left"><span class="j">始値</span></div><div class="t tj" style="left:938px;top:534px;width:66px;text-align:left"><span class="j">高値</span></div><div class="t tj" style="left:1005px;top:534px;width:66px;text-align:left"><span class="j">安値</span></div><div class="t tj" style="left:804px;top:577px;width:66px;text-align:left"><span class="j">為替終値</span></div><div class="t tj" style="left:871px;top:577px;width:66px;text-align:left"><span class="j">始値</span></div><div class="t tj" style="left:938px;top:577px;width:66px;text-align:left"><span class="j">高値</span></div><div class="t tj" style="left:1005px;top:577px;width:66px;text-align:left"><span class="j">安値</span></div><div class="t tj" style="left:804px;top:662px;width:66px;text-align:left"><span class="j">買い</span></div><div class="t tj" style="left:938px;top:662px;width:66px;text-align:left"><span class="j">売り</span></div><div class="t" style="left:804px;top:89px;width:66px;text-align:right"><span class="s" style="transform-origin:right">-109.41</span></div><div class="t" style="left:871px;top:89px;width:66px;text-align:right"><span class="s" style="transform-origin:right">65</span></div><div class="t" style="left:938px;top:89px;width:66px;text-align:right"><span class="s" style="transform-origin:right">0</span></div><div class="t" style="left:1005px;top:89px;width:66px;text-align:right"><span class="s" style="transform-origin:right">36.42</span></div><div class="t tj" style="left:804px;top:132px;width:66px;text-align:left"><span class="j">陽</span></div><div class="t" style="left:871px;top:131px;width:66px;text-align:right"><span class="s" style="transform-origin:right">36%</span></div><div class="t tj" style="left:938px;top:132px;width:66px;text-align:left"><span class="j">陰</span></div><div class="t tj" style="left:1005px;top:132px;width:66px;text-align:left"><span class="j">陽</span></div><div class="t" style="left:804px;top:175px;width:66px;text-align:right"><span class="s" style="transform-origin:right">600.4</span></div><div class="t" style="left:871px;top:175px;width:66px;text-align:right"><span class="s" style="transform-origin:right">71%</span></div><div class="t" style="left:938px;top:175px;width:66px;text-align:right"><span class="s" style="transform-origin:right">3119</span></div><div class="t" style="left:1005px;top:175px;width:66px;text-align:right"><span class="s" style="transform-origin:right">1283</span></div><div class="t" style="left:871px;top:217px;width:66px;text-align:left"><span class="s" style="transform-origin:left">83%</span></div><div class="t" style="left:938px;top:217px;width:66px;text-align:left"><span class="s" style="transform-origin:left">1924</span></div><div class="t" style="left:1005px;top:217px;width:66px;text-align:left"><span class="s" style="transform-origin:left">406</span></div><div class="t" style="left:871px;top:259px;width:66px;text-align:left"><span class="s" style="transform-origin:left">56%</span></div><div class="t" style="left:938px;top:259px;width:66px;text-align:left"><span class="s" style="transform-origin:left">268</span></div><div class="t" style="left:1005px;top:259px;width:66px;text-align:left"><span class="s" style="transform-origin:left">211</span></div><div class="t" style="left:804px;top:301px;width:66px;text-align:left"><span class="s" style="transform-origin:left">10.05</span></div><div class="t" style="left:871px;top:301px;width:66px;text-align:left"><span class="s" style="transform-origin:left">59%</span></div><div class="t" style="left:938px;top:301px;width:66px;text-align:left"><span class="s" style="transform-origin:left">435</span></div><div class="t" style="left:1005px;top:301px;width:66px;text-align:left"><span class="s" style="transform-origin:left">298</span></div><div class="t" style="left:804px;top:343px;width:66px;text-align:left"><span class="s" style="transform-origin:left">-0.69</span></div><div class="t" style="left:871px;top:343px;width:66px;text-align:left"><span class="s" style="transform-origin:left">51%</span></div><div class="t" style="left:938px;top:343px;width:66px;text-align:left"><span class="s" style="transform-origin:left">184</span></div><div class="t" style="left:1005px;top:343px;width:66px;text-align:left"><span class="s" style="transform-origin:left">176</span></div><div class="t" style="left:804px;top:386px;width:66px;text-align:right"><span class="s" style="transform-origin:right">29,149.41</span></div><div class="t" style="left:871px;top:386px;width:66px;text-align:right"><span class="s" style="transform-origin:right">28,912.54</span></div><div class="t" style="left:938px;top:386px;width:66px;text-align:right"><span class="s" style="transform-origin:right">29,194.11</span></div><div class="t" style="left:1005px;top:386px;width:66px;text-align:right"><span class="s" style="transform-origin:right">28,899.66</span></div><div class="t" style="left:804px;top:428px;width:66px;text-align:right"><span class="s" style="transform-origin:right">1,145.19</span></div><div class="t" style="left:938px;top:428px;width:66px;text-align:right"><span class="s" style="transform-origin:right">1,947.44</span></div><div class="t tj" style="left:871px;top:450px;width:66px;text-align:left"><span class="j">下降</span></div><div class="t tj" style="left:938px;top:450px;width:133px;text-align:left"><span class="j">ジャスダック</span></div><div class="t tj" style="left:871px;top:471px;width:66px;text-align:left"><span class="j">下降</span></div><div class="t" style="left:938px;top:470px;width:66px;text-align:right"><span class="s" style="transform-origin:right">3882.65</span></div><div class="t tj" style="left:1005px;top:471px;width:66px;text-align:left"><span class="j">陽</span></div><div class="t" style="left:804px;top:512px;width:66px;text-align:right"><span class="s" style="transform-origin:right">29040</span></div><div class="t" style="left:804px;top:554px;width:66px;text-align:right"><span class="s" style="transform-origin:right">34,529.00</span></div><div class="t" style="left:804px;top:598px;width:66px;text-align:right"><span class="s" style="transform-origin:right">108.78</span></div><div class="t" style="left:871px;top:598px;width:66px;text-align:right"><span class="s" style="transform-origin:right">108.79</span></div><div class="t" style="left:938px;top:598px;width:66px;text-align:right"><span class="s" style="transform-origin:right">108.9</span></div><div class="t" style="left:1005px;top:598px;width:66px;text-align:right"><span class="s" style="transform-origin:right">108.69</span></div><div class="t tj" style="left:804px;top:641px;width:66px;text-align:left"><span class="j">前日比</span></div><div class="t" style="left:871px;top:640px;width:66px;text-align:left"><span class="s" style="transform-origin:left">-42</span></div><div class="t tj" style="left:938px;top:641px;width:66px;text-align:left"><span class="j">前日比</span></div><div class="t" style="left:1005px;top:640px;width:66px;text-align:left"><span class="s" style="transform-origin:left">87</span></div><div class="t" style="left:804px;top:682px;width:66px;text-align:left"><span class="s" style="transform-origin:left">382</span></div><div class="t" style="left:871px;top:682px;width:66px;text-align:left"><span class="s" style="transform-origin:left">-24</span></div><div class="t" style="left:938px;top:682px;width:66px;text-align:left"><span class="s" style="transform-origin:left">800</span></div><div class="t" style="left:1005px;top:682px;width:66px;text-align:left"><span class="s" style="transform-origin:left">56</span></div><div class="t tj" style="left:1072px;top:4px;width:267px;text-align:center">5<span class="j">月</span>27<span class="j">日</span></div><div class="t" style="left:1072px;top:25px;width:66px;text-align:right"><span class="s" style="transform-origin:right">100%</span></div><div class="t" style="left:1139px;top:25px;width:66px;text-align:right"><span class="s" style="transform-origin:right">28485.52</span></div><div class="t" style="left:1072px;top:47px;width:66px;text-align:right"><span class="s" style="transform-origin:right">102%</span></div><div class="t" style="left:1139px;top:47px;width:66px;text-align:right"><span class="s" style="transform-origin:right">29,149.41</span></div><div class="t tj" style="left:1072px;top:69px;width:66px;text-align:left"><span class="j">夜間</span>/<span class="j">日経</span></div><div class="t tj" style="left:1139px;top:69px;width:66px;text-align:left"><span class="j">ダウ前日比</span></div><div class="t tj" style="left:1206px;top:69px;width:66px;text-align:left"><span class="j">円高</span></div><div class="t tj" style="left:1273px;top:69px;width:66px;text-align:left">TOP<span class="j">前日比</span></div><div class="t tj" style="left:1072px;top:111px;width:66px;text-align:left"><span class="j">日経陽陰</span></div><div class="t tj" style="left:1139px;top:111px;width:66px;text-align:left"><span class="j">空売比率</span></div><div class="t tj" style="left:1206px;top:111px;width:66px;text-align:left"><span class="j">マザ陽陰</span></div><div class="t tj" style="left:1273px;top:111px;width:66px;text-align:left">top<span class="j">陽陰</span></div><div class="t tj" style="left:1072px;top:154px;width:66px;text-align:left"><span class="j">前日比</span></div><div class="t tj" style="left:1139px;top:154px;width:66px;text-align:left"><span class="j">値上下比</span></div><div class="t tj" style="left:1206px;top:154px;width:66px;text-align:left"><span class="j">値上</span></div><div class="t tj" style="left:1273px;top:154px;width:66px;text-align:left"><span class="j">値下</span></div><div class="t tj" style="left:1139px;top:197px;width:66px;text-align:left"><span class="j">東一前日比</span></div><div class="t tj" style="left:1206px;top:197px;width:66px;text-align:left"><span class="j">値上</span></div><div class="t tj" style="left:1273px;top:197px;width:66px;text-align:left"><span class="j">値下</span></div><div class="t tj" style="left:1139px;top:239px;width:66px;text-align:left"><span class="j">東二前日比</span></div><div class="t tj" style="left:1206px;top:239px;width:66px;text-align:left"><span class="j">値上</span></div><div class="t tj" style="left:1273px;top:239px;width:66px;text-align:left"><span class="j">値下</span></div><div class="t tj" style="left:1072px;top:281px;width:66px;text-align:left">JQ<span class="j">前日比</span></div><div class="t tj" style="left:1139px;top:281px;width:66px;text-align:left">jq<span class="j">前日比</span></div><div class="t tj" style="left:1206px;top:281px;width:66px;text-align:left"><span class="j">値上</span></div><div class="t tj" style="left:1273px;top:281px;width:66px;text-align:left"><span class="j">値下</span></div><div class="t tj" style="left:1072px;top:323px;width:66px;text-align:left"><span class="j">マザ前日比</span></div><div class="t tj" style="left:1139px;top:323px;width:66px;text-align:left"><span class="j">値上下比</span></div><div class="t tj" style="left:1206px;top:323px;width:66px;text-align:left"><span class="j">値上</span></div><div class="t tj" style="left:1273px;top:323px;width:66px;text-align:left"><span class="j">値下</span></div><div class="t tj" style="left:1072px;top:365px;width:66px;text-align:left"><span class="j">終値</span></div><div class="t tj" style="left:1139px;top:365px;width:66px;text-align:left"><span class="j">始値</span></div><div class="t tj" style="left:1206px;top:365px;width:66px;text-align:left"><span class="j">高値</span></div><div class="t tj" style="left:1273px;top:365px;width:66px;text-align:left"><span class="j">安値</span></div><div class="t tj" style="left:1072px;top:408px;width:66px;text-align:left"><span class="j">マザ終値</span></div><div class="t tj" style="left:1139px;top:408px;width:66px;text-align:left"><span class="j">始値</span></div><div class="t tj" style="left:1206px;top:408px;width:66px;text-align:left">TOP<span class="j">終値</span></div><div class="t tj" style="left:1273px;top:408px;width:66px;text-align:left"><span class="j">始値</span></div><div class="t tj" style="left:1072px;top:492px;width:66px;text-align:left"><span class="j">先物夜間</span></div><div class="t tj" style="left:1139px;top:492px;width:66px;text-align:left"><span class="j">始値</span></div><div class="t tj" style="left:1206px;top:492px;width:66px;text-align:left"><span class="j">高値</span></div><div class="t tj" style="left:1273px;top:492px;width:66px;text-align:left"><span class="j">安値</span></div><div class="t tj" style="left:1072px;top:534px;width:66px;text-align:left"><span class="j">ダウ終値</span></div><div class="t tj" style="left:1139px;top:534px;width:66px;text-align:left"><span class="j">始値</span></div><div class="t tj" style="left:1206px;top:534px;width:66px;text-align:left"><span class="j">高値</span></div><div class="t tj" style="left:1273px;top:534px;width:66px;text-align:left"><span class="j">安値</span></div><div class="t tj" style="left:1072px;top:577px;width:66px;text-align:left"><span class="j">為替終値</span></div><div class="t tj" style="left:1139px;top:577px;width:66px;text-align:left"><span class="j">始値</span></div><div class="t tj" style="left:1206px;top:577px;width:66px;text-align:left"><span class="j">高値</span></div><div class="t tj" style="left:1273px;top:577px;width:66px;text-align:left"><span class="j">安値</span></div><div class="t tj" style="left:1072px;top:662px;width:66px;text-align:left"><span class="j">買い</span></div><div class="t tj" style="left:1206px;top:662px;width:66px;text-align:left"><span class="j">売り</span></div><div class="t" style="left:1072px;top:89px;width:66px;text-align:right"><span class="s" style="transform-origin:right">330.99</span></div><div class="t" style="left:1139px;top:89px;width:66px;text-align:right"><span class="s" style="transform-origin:right">141</span></div><div class="t" style="left:1206px;top:89px;width:66px;text-align:right"><span class="s" style="transform-origin:right">0</span></div><div class="t" style="left:1273px;top:89px;width:66px;text-align:right"><span class="s" style="transform-origin:right">-9.65</span></div><div class="t tj" style="left:1072px;top:132px;width:66px;text-align:left"><span class="j">陽</span></div><div class="t" style="left:1139px;top:131px;width:66px;text-align:right"><span class="s" style="transform-origin:right">44%</span></div><div class="t tj" style="left:1206px;top:132px;width:66px;text-align:left"><span class="j">陰</span></div><div class="t tj" style="left:1273px;top:132px;width:66px;text-align:left"><span class="j">陰</span></div><div class="t" style="left:1072px;top:175px;width:66px;text-align:right"><span class="s" style="transform-origin:right">-93.18</span></div><div class="t" style="left:1139px;top:175px;width:66px;text-align:right"><span class="s" style="transform-origin:right">33%</span></div><div class="t" style="left:1206px;top:175px;width:66px;text-align:right"><span class="s" style="transform-origin:right">1438</span></div><div class="t" style="left:1273px;top:175px;width:66px;text-align:right"><span class="s" style="transform-origin:right">2922</span></div><div class="t" style="left:1139px;top:217px;width:66px;text-align:left"><span class="s" style="transform-origin:left">24%</span></div><div class="t" style="left:1206px;top:217px;width:66px;text-align:left"><span class="s" style="transform-origin:left">557</span></div><div class="t" style="left:1273px;top:217px;width:66px;text-align:left"><span class="s" style="transform-origin:left">1732</span></div><div class="t" style="left:1139px;top:259px;width:66px;text-align:left"><span class="s" style="transform-origin:left">42%</span></div><div class="t" style="left:1206px;top:259px;width:66px;text-align:left"><span class="s" style="transform-origin:left">204</span></div><div class="t" style="left:1273px;top:259px;width:66px;text-align:left"><span class="s" style="transform-origin:left">285</span></div><div class="t" style="left:1072px;top:301px;width:66px;text-align:left"><span class="s" style="transform-origin:left">1.23</span></div><div class="t" style="left:1139px;top:301px;width:66px;text-align:left"><span class="s" style="transform-origin:left">43%</span></div><div class="t" style="left:1206px;top:301px;width:66px;text-align:left"><span class="s" style="transform-origin:left">316</span></div><div class="t" style="left:1273px;top:301px;width:66px;text-align:left"><span class="s" style="transform-origin:left">417</span></div><div class="t" style="left:1072px;top:343px;width:66px;text-align:left"><span class="s" style="transform-origin:left">-2.70</span></div><div class="t" style="left:1139px;top:343px;width:66px;text-align:left"><span class="s" style="transform-origin:left">34%</span></div><div class="t" style="left:1206px;top:343px;width:66px;text-align:left"><span class="s" style="transform-origin:left">124</span></div><div class="t" style="left:1273px;top:343px;width:66px;text-align:left"><span class="s" style="transform-origin:left">239</span></div><div class="t" style="left:1072px;top:386px;width:66px;text-align:right"><span class="s" style="transform-origin:right">28,549.01</span></div><div class="t" style="left:1139px;top:386px;width:66px;text-align:right"><span class="s" style="transform-origin:right">28,543.32</span></div><div class="t" style="left:1206px;top:386px;width:66px;text-align:right"><span class="s" style="transform-origin:right">28,587.21</span></div><div class="t" style="left:1273px;top:386px;width:66px;text-align:right"><span class="s" style="transform-origin:right">28,360.56</span></div><div class="t" style="left:1072px;top:428px;width:66px;text-align:right"><span class="s" style="transform-origin:right">1,145.88</span></div><div class="t" style="left:1206px;top:428px;width:66px;text-align:right"><span class="s" style="transform-origin:right">1,911.02</span></div><div class="t tj" style="left:1139px;top:450px;width:66px;text-align:left"><span class="j">下降</span></div><div class="t tj" style="left:1206px;top:450px;width:133px;text-align:left"><span class="j">ジャスダック</span></div><div class="t tj" style="left:1139px;top:471px;width:66px;text-align:left"><span class="j">下降</span></div><div class="t" style="left:1206px;top:470px;width:66px;text-align:right"><span class="s" style="transform-origin:right">3872.6</span></div><div class="t tj" style="left:1273px;top:471px;width:66px;text-align:left"><span class="j">陰</span></div><div class="t" style="left:1072px;top:512px;width:66px;text-align:right"><span class="s" style="transform-origin:right">28880</span></div><div class="t" style="left:1072px;top:554px;width:66px;text-align:right"><span class="s" style="transform-origin:right">34,464.00</span></div><div class="t" style="left:1072px;top:598px;width:66px;text-align:right"><span class="s" style="transform-origin:right">108.78</span></div><div class="t" style="left:1139px;top:598px;width:66px;text-align:right"><span class="s" style="transform-origin:right">108.79</span></div><div class="t" style="left:1206px;top:598px;width:66px;text-align:right"><span class="s" style="transform-origin:right">108.9</span></div><div class="t" style="left:1273px;top:598px;width:66px;text-align:right"><span class="s" style="transform-origin:right">108.69</span></div><div class="t tj" style="left:1072px;top:641px;width:66px;text-align:left"><span class="j">前日比</span></div><div class="t" style="left:1139px;top:640px;width:66px;text-align:left"><span class="s" style="transform-origin:left">15</span></div><div class="t tj" style="left:1206px;top:641px;width:66px;text-align:left"><span class="j">前日比</span></div><div class="t" style="left:1273px;top:640px;width:66px;text-align:left"><span class="s" style="transform-origin:left">-35</span></div><div class="t" style="left:1072px;top:682px;width:66px;text-align:left"><span class="s" style="transform-origin:left">406</span></div><div class="t" style="left:1139px;top:682px;width:66px;text-align:left"><span class="s" style="transform-origin:left">18</span></div><div class="t" style="left:1206px;top:682px;width:66px;text-align:left"><span class="s" style="transform-origin:left">744</span></div><div class="t" style="left:1273px;top:682px;width:66px;text-align:left"><span class="s" style="transform-origin:left">-31</span></div><div class="t tj" style="left:1340px;top:4px;width:267px;text-align:center">5<span class="j">月</span>26<span class="j">日</span></div><div class="t" style="left:1340px;top:25px;width:66px;text-align:right"><span class="s" style="transform-origin:right">101%</span></div><div class="t" style="left:1407px;top:25px;width:66px;text-align:right"><span class="s" style="transform-origin:right">28395.37</span></div><div class="t" style="left:1340px;top:47px;width:66px;text-align:right"><span class="s" style="transform-origin:right">101%</span></div><div class="t" style="left:1407px;top:47px;width:66px;text-align:right"><span class="s" style="transform-origin:right">28,549.01</span></div><div class="t tj" style="left:1340px;top:69px;width:66px;text-align:left"><span class="j">夜間</span>/<span class="j">日経</span></div><div class="t tj" style="left:1407px;top:69px;width:66px;text-align:left"><span class="j">ダウ前日比</span></div><div class="t tj" style="left:1474px;top:69px;width:66px;text-align:left"><span class="j">円高</span></div><div class="t tj" style="left:1541px;top:69px;width:66px;text-align:left">TOP<span class="j">前日比</span></div><div class="t tj" style="left:1340px;top:111px;width:66px;text-align:left"><span class="j">日経陽陰</span></div><div class="t tj" style="left:1407px;top:111px;width:66px;text-align:left"><span class="j">空売比率</span></div><div class="t tj" style="left:1474px;top:111px;width:66px;text-align:left"><span class="j">マザ陽陰</span></div><div class="t tj" style="left:1541px;top:111px;width:66px;text-align:left">top<span class="j">陽陰</span></div><div class="t tj" style="left:1340px;top:154px;width:66px;text-align:left"><span class="j">前日比</span></div><div class="t tj" style="left:1407px;top:154px;width:66px;text-align:left"><span class="j">値上下比</span></div><div class="t tj" style="left:1474px;top:154px;width:66px;text-align:left"><span class="j">値上</span></div><div class="t tj" style="left:1541px;top:154px;width:66px;text-align:left"><span class="j">値下</span></div><div class="t tj" style="left:1407px;top:197px;width:66px;text-align:left"><span class="j">東一前日比</span></div><div class="t tj" style="left:1474px;top:197px;width:66px;text-align:left"><span class="j">値上</span></div><div class="t tj" style="left:1541px;top:197px;width:66px;text-align:left"><span class="j">値下</span></div><div class="t tj" style="left:1407px;top:239px;width:66px;text-align:left"><span class="j">東二前日比</span></div><div class="t tj" style="left:1474px;top:239px;width:66px;text-align:left"><span class="j">値上</span></div><div class="t tj" style="left:1541px;top:239px;width:66px;text-align:left"><span class="j">値下</span></div><div class="t tj" style="left:1340px;top:281px;width:66px;text-align:left">JQ<span class="j">前日比</span></div><div class="t tj" style="left:1407px;top:281px;width:66px;text-align:left">jq<span class="j">前日比</span></div><div class="t tj" style="left:1474px;top:281px;width:66px;text-align:left"><span class="j">値上</span></div><div class="t tj" style="left:1541px;top:281px;width:66px;text-align:left"><span class="j">値下</span></div><div class="t tj" style="left:1340px;top:323px;width:66px;text-align:left"><span class="j">マザ前日比</span></div><div class="t tj" style="left:1407px;top:323px;width:66px;text-align:left"><span class="j">値上下比</span></div><div class="t tj" style="left:1474px;top:323px;width:66px;text-align:left"><span class="j">値上</span></div><div class="t tj" style="left:1541px;top:323px;width:66px;text-align:left"><span class="j">値下</span></div><div class="t tj" style="left:1340px;top:365px;width:66px;text-align:left"><span class="j">終値</span></div><div class="t tj" style="left:1407px;top:365px;width:66px;text-align:left"><span class="j">始値</span></div><div class="t tj" style="left:1474px;top:365px;width:66px;text-align:left"><span class="j">高値</span></div><div class="t tj" style="left:1541px;top:365px;width:66px;text-align:left"><span class="j">安値</span></div><div class="t tj" style="left:1340px;top:408px;width:66px;text-align:left"><span class="j">マザ終値</span></div><div class="t tj" style="left:1407px;top:408px;width:66px;text-align:left"><span class="j">始値</span></div><div class="t tj" style="left:1474px;top:408px;width:66px;text-align:left">TOP<span class="j">終値</span></div><div class="t tj" style="left:1541px;top:408px;width:66px;text-align:left"><span class="j">始値</span></div><div class="t tj" style="left:1340px;top:492px;width:66px;text-align:left"><span class="j">先物夜間</span></div><div class="t tj" style="left:1407px;top:492px;width:66px;text-align:left"><span class="j">始値</span></div><div class="t tj" style="left:1474px;top:492px;width:66px;text-align:left"><span class="j">高値</span></div><div class="t tj" style="left:1541px;top:492px;width:66px;text-align:left"><span class="j">安値</span></div><div class="t tj" style="left:1340px;top:534px;width:66px;text-align:left"><span class="j">ダウ終値</span></div><div class="t tj" style="left:1407px;top:534px;width:66px;text-align:left"><span class="j">始値</span></div><div class="t tj" style="left:1474px;top:534px;width:66px;text-align:left"><span class="j">高値</span></div><div class="t tj" style="left:1541px;top:534px;width:66px;text-align:left"><span class="j">安値</span></div><div class="t tj" style="left:1340px;top:577px;width:66px;text-align:left"><span class="j">為替終値</span></div><div class="t tj" style="left:1407px;top:577px;width:66px;text-align:left"><span class="j">始値</span></div><div class="t tj" style="left:1474px;top:577px;width:66px;text-align:left"><span class="j">高値</span></div><div class="t tj" style="left:1541px;top:577px;width:66px;text-align:left"><span class="j">安値</span></div><div class="t tj" style="left:1340px;top:662px;width:66px;text-align:left"><span class="j">買い</span></div><div class="t tj" style="left:1474px;top:662px;width:66px;text-align:left"><span class="j">売り</span></div><div class="t" style="left:1340px;top:89px;width:66px;text-align:right"><span class="s" style="transform-origin:right">-22.19</span></div><div class="t" style="left:1407px;top:89px;width:66px;text-align:right"><span class="s" style="transform-origin:right">11</span></div><div class="t" style="left:1474px;top:89px;width:66px;text-align:right"><span class="s" style="transform-origin:right">0</span></div><div class="t" style="left:1541px;top:89px;width:66px;text-align:right"><span class="s" style="transform-origin:right">1.15</span></div><div class="t tj" style="left:1340px;top:132px;width:66px;text-align:left"><span class="j">陽</span></div><div class="t" style="left:1407px;top:131px;width:66px;text-align:right"><span class="s" style="transform-origin:right">43%</span></div><div class="t tj" style="left:1474px;top:132px;width:66px;text-align:left"><span class="j">陽</span></div><div class="t tj" style="left:1541px;top:132px;width:66px;text-align:left"><span class="j">陽</span></div><div class="t" style="left:1340px;top:175px;width:66px;text-align:right"><span class="s" style="transform-origin:right">88.21</span></div><div class="t" style="left:1407px;top:175px;width:66px;text-align:right"><span class="s" style="transform-origin:right">45%</span></div><div class="t" style="left:1474px;top:175px;width:66px;text-align:right"><span class="s" style="transform-origin:right">1937</span></div><div class="t" style="left:1541px;top:175px;width:66px;text-align:right"><span class="s" style="transform-origin:right">2374</span></div><div class="t" style="left:1407px;top:217px;width:66px;text-align:left"><span class="s" style="transform-origin:left">38%</span></div><div class="t" style="left:1474px;top:217px;width:66px;text-align:left"><span class="s" style="transform-origin:left">850</span></div><div class="t" style="left:1541px;top:217px;width:66px;text-align:left"><span class="s" style="transform-origin:left">1394</span></div><div class="t" style="left:1407px;top:259px;width:66px;text-align:left"><span class="s" style="transform-origin:left">46%</span></div><div class="t" style="left:1474px;top:259px;width:66px;text-align:left"><span class="s" style="transform-origin:left">227</span></div><div class="t" style="left:1541px;top:259px;width:66px;text-align:left"><span class="s" style="transform-origin:left">262</span></div><div class="t" style="left:1340px;top:301px;width:66px;text-align:left"><span class="s" style="transform-origin:left">-2.81</span></div><div class="t" style="left:1407px;top:301px;width:66px;text-align:left"><span class="s" style="transform-origin:left">51%</span></div><div class="t" style="left:1474px;top:301px;width:66px;text-align:left"><span class="s" style="transform-origin:left">371</span></div><div class="t" style="left:1541px;top:301px;width:66px;text-align:left"><span class="s" style="transform-origin:left">358</span></div><div class="t" style="left:1340px;top:343px;width:66px;text-align:left"><span class="s" style="transform-origin:left">15.10</span></div><div class="t" style="left:1407px;top:343px;width:66px;text-align:left"><span class="s" style="transform-origin:left">55%</span></div><div class="t" style="left:1474px;top:343px;width:66px;text-align:left"><span class="s" style="transform-origin:left">201</span></div><div class="t" style="left:1541px;top:343px;width:66px;text-align:left"><span class="s" style="transform-origin:left">165</span></div><div class="t" style="left:1340px;top:386px;width:66px;text-align:right"><span class="s" style="transform-origin:right">28,642.19</span></div><div class="t" style="left:1407px;top:386px;width:66px;text-align:right"><span class="s" style="transform-origin:right">28,396.62</span></div><div class="t" style="left:1474px;top:386px;width:66px;text-align:right"><span class="s" style="transform-origin:right">28,710.83</span></div><div class="t" style="left:1541px;top:386px;width:66px;text-align:right"><span class="s" style="transform-origin:right">28,396.62</span></div><div class="t" style="left:1340px;top:428px;width:66px;text-align:right"><span class="s" style="transform-origin:right">1,148.58</span></div><div class="t" style="left:1474px;top:428px;width:66px;text-align:right"><span class="s" style="transform-origin:right">1,920.67</span></div><div class="t tj" style="left:1407px;top:450px;width:66px;text-align:left"><span class="j">下降</span></div><div class="t tj" style="left:1474px;top:450px;width:133px;text-align:left"><span class="j">ジャスダック</span></div><div class="t tj" style="left:1407px;top:471px;width:66px;text-align:left"><span class="j">下降</span></div><div class="t" style="left:1474px;top:470px;width:66px;text-align:right"><span class="s" style="transform-origin:right">3871.37</span></div><div class="t tj" style="left:1541px;top:471px;width:66px;text-align:left"><span class="j">陰</span></div><div class="t" style="left:1340px;top:512px;width:66px;text-align:right"><span class="s" style="transform-origin:right">28620</span></div><div class="t" style="left:1340px;top:554px;width:66px;text-align:right"><span class="s" style="transform-origin:right">34,323.00</span></div><div class="t" style="left:1340px;top:598px;width:66px;text-align:right"><span class="s" style="transform-origin:right">108.78</span></div><div class="t" style="left:1407px;top:598px;width:66px;text-align:right"><span class="s" style="transform-origin:right">108.79</span></div><div class="t" style="left:1474px;top:598px;width:66px;text-align:right"><span class="s" style="transform-origin:right">108.9</span></div><div class="t" style="left:1541px;top:598px;width:66px;text-align:right"><span class="s" style="transform-origin:right">108.69</span></div><div class="t tj" style="left:1340px;top:641px;width:66px;text-align:left"><span class="j">前日比</span></div><div class="t" style="left:1407px;top:640px;width:66px;text-align:left"><span class="s" style="transform-origin:left">-18</span></div><div class="t tj" style="left:1474px;top:641px;width:66px;text-align:left"><span class="j">前日比</span></div><div class="t" style="left:1541px;top:640px;width:66px;text-align:left"><span class="s" style="transform-origin:left">12</span></div><div class="t" style="left:1340px;top:682px;width:66px;text-align:left"><span class="s" style="transform-origin:left">388</span></div><div class="t" style="left:1407px;top:682px;width:66px;text-align:left"><span class="s" style="transform-origin:left">3</span></div><div class="t" style="left:1474px;top:682px;width:66px;text-align:left"><span class="s" style="transform-origin:left">775</span></div><div class="t" style="left:1541px;top:682px;width:66px;text-align:left"><span class="s" style="transform-origin:left">4</span></div><div class="t tj" style="left:1608px;top:4px;width:267px;text-align:center">5<span class="j">月</span>25<span class="j">日</span></div><div class="t" style="left:1608px;top:25px;width:66px;text-align:right"><span class="s" style="transform-origin:right">101%</span></div><div class="t" style="left:1675px;top:25px;width:66px;text-align:right"><span class="s" style="transform-origin:right">28275.82</span></div><div class="t" style="left:1608px;top:47px;width:66px;text-align:right"><span class="s" style="transform-origin:right">101%</span></div><div class="t" style="left:1675px;top:47px;width:66px;text-align:right"><span class="s" style="transform-origin:right">28,642.19</span></div><div class="t tj" style="left:1608px;top:69px;width:66px;text-align:left"><span class="j">夜間</span>/<span class="j">日経</span></div><div class="t tj" style="left:1675px;top:69px;width:66px;text-align:left"><span class="j">ダウ前日比</span></div><div class="t tj" style="left:1742px;top:69px;width:66px;text-align:left"><span class="j">円高</span></div><div class="t tj" style="left:1809px;top:69px;width:66px;text-align:left">TOP<span class="j">前日比</span></div><div class="t tj" style="left:1608px;top:111px;width:66px;text-align:left"><span class="j">日経陽陰</span></div><div class="t tj" style="left:1675px;top:111px;width:66px;text-align:left"><span class="j">空売比率</span></div><div class="t tj" style="left:1742px;top:111px;width:66px;text-align:left"><span class="j">マザ陽陰</span></div><div class="t tj" style="left:1809px;top:111px;width:66px;text-align:left">top<span class="j">陽陰</span></div><div class="t tj" style="left:1608px;top:154px;width:66px;text-align:left"><span class="j">前日比</span></div><div class="t tj" style="left:1675px;top:154px;width:66px;text-align:left"><span class="j">値上下比</span></div><div class="t tj" style="left:1742px;top:154px;width:66px;text-align:left"><span class="j">値上</span></div><div class="t tj" style="left:1809px;top:154px;width:66px;text-align:left"><span class="j">値下</span></div><div class="t tj" style="left:1675px;top:197px;width:66px;text-align:left"><span class="j">東一前日比</span></div><div class="t tj" style="left:1742px;top:197px;width:66px;text-align:left"><span class="j">値上</span></div><div class="t tj" style="left:1809px;top:197px;width:66px;text-align:left"><span class="j">値下</span></div><div class="t tj" style="left:1675px;top:239px;width:66px;text-align:left"><span class="j">東二前日比</span></div><div class="t tj" style="left:1742px;top:239px;width:66px;text-align:left"><span class="j">値上</span></div><div class="t tj" style="left:1809px;top:239px;width:66px;text-align:left"><span class="j">値下</span></div><div class="t tj" style="left:1608px;top:281px;width:66px;text-align:left">JQ<span class="j">前日比</span></div><div class="t tj" style="left:1675px;top:281px;width:66px;text-align:left">jq<span class="j">前日比</span></div><div class="t tj" style="left:1742px;top:281px;width:66px;text-align:left"><span class="j">値上</span></div><div class="t tj" style="left:1809px;top:281px;width:66px;text-align:left"><span class="j">値下</span></div><div class="t tj" style="left:1608px;top:323px;width:66px;text-align:left"><span class="j">マザ前日比</span></div><div class="t tj" style="left:1675px;top:323px;width:66px;text-align:left"><span class="j">値上下比</span></div><div class="t tj" style="left:1742px;top:323px;width:66px;text-align:left"><span class="j">値上</span></div><div class="t tj" style="left:1809px;top:323px;width:66px;text-align:left"><span class="j">値下</span></div><div class="t tj" style="left:1608px;top:365px;width:66px;text-align:left"><span class="j">終値</span></div><div class="t tj" style="left:1675px;top:365px;width:66px;text-align:left"><span class="j">始値</span></div><div class="t tj" style="left:1742px;top:365px;width:66px;text-align:left"><span class="j">高値</span></div><div class="t tj" style="left:1809px;top:365px;width:66px;text-align:left"><span class="j">安値</span></div><div class="t tj" style="left:1608px;top:408px;width:66px;text-align:left"><span class="j">マザ終値</span></div><div class="t tj" style="left:1675px;top:408px;width:66px;text-align:left"><span class="j">始値</span></div><div class="t tj" style="left:1742px;top:408px;width:66px;text-align:left">TOP<span class="j">終値</span></div><div class="t tj" style="left:1809px;top:408px;width:66px;text-align:left"><span class="j">始値</span></div><div class="t tj" style="left:1608px;top:492px;width:66px;text-align:left"><span class="j">先物夜間</span></div><div class="t tj" style="left:1675px;top:492px;width:66px;text-align:left"><span class="j">始値</span></div><div class="t tj" style="left:1742px;top:492px;width:66px;text-align:left"><span class="j">高値</span></div><div class="t tj" style="left:1809px;top:492px;width:66px;text-align:left"><span class="j">安値</span></div><div class="t tj" style="left:1608px;top:534px;width:66px;text-align:left"><span class="j">ダウ終値</span></div><div class="t tj" style="left:1675px;top:534px;width:66px;text-align:left"><span class="j">始値</span></div><div class="t tj" style="left:1742px;top:534px;width:66px;text-align:left"><span class="j">高値</span></div><div class="t tj" style="left:1809px;top:534px;width:66px;text-align:left"><span class="j">安値</span></div><div class="t tj" style="left:1608px;top:577px;width:66px;text-align:left"><span class="j">為替終値</span></div><div class="t tj" style="left:1675px;top:577px;width:66px;text-align:left"><span class="j">始値</span></div><div class="t tj" style="left:1742px;top:577px;width:66px;text-align:left"><span class="j">高値</span></div><div class="t tj" style="left:1809px;top:577px;width:66px;text-align:left"><span class="j">安値</span></div><div class="t tj" style="left:1608px;top:662px;width:66px;text-align:left"><span class="j">買い</span></div><div class="t tj" style="left:1742px;top:662px;width:66px;text-align:left"><span class="j">売り</span></div><div class="t" style="left:1608px;top:89px;width:66px;text-align:right"><span class="s" style="transform-origin:right">-143.98</span></div><div class="t" style="left:1675px;top:89px;width:66px;text-align:right"><span class="s" style="transform-origin:right">-81</span></div><div class="t" style="left:1742px;top:89px;width:66px;text-align:right"><span class="s" style="transform-origin:right">0</span></div><div class="t" style="left:1809px;top:89px;width:66px;text-align:right"><span class="s" style="transform-origin:right">6.48</span></div><div class="t tj" style="left:1608px;top:132px;width:66px;text-align:left"><span class="j">陽</span></div><div class="t" style="left:1675px;top:131px;width:66px;text-align:right"><span class="s" style="transform-origin:right">41%</span></div><div class="t tj" style="left:1742px;top:132px;width:66px;text-align:left"><span class="j">陽</span></div><div class="t tj" style="left:1809px;top:132px;width:66px;text-align:left"><span class="j">陰</span></div><div class="t" style="left:1608px;top:175px;width:66px;text-align:right"><span class="s" style="transform-origin:right">189.37</span></div><div class="t" style="left:1675px;top:175px;width:66px;text-align:right"><span class="s" style="transform-origin:right">46%</span></div><div class="t" style="left:1742px;top:175px;width:66px;text-align:right"><span class="s" style="transform-origin:right">2015</span></div><div class="t" style="left:1809px;top:175px;width:66px;text-align:right"><span class="s" style="transform-origin:right">2327</span></div><div class="t" style="left:1675px;top:217px;width:66px;text-align:left"><span class="s" style="transform-origin:left">34%</span></div><div class="t" style="left:1742px;top:217px;width:66px;text-align:left"><span class="s" style="transform-origin:left">782</span></div><div class="t" style="left:1809px;top:217px;width:66px;text-align:left"><span class="s" style="transform-origin:left">1502</span></div><div class="t" style="left:1675px;top:259px;width:66px;text-align:left"><span class="s" style="transform-origin:left">56%</span></div><div class="t" style="left:1742px;top:259px;width:66px;text-align:left"><span class="s" style="transform-origin:left">271</span></div><div class="t" style="left:1809px;top:259px;width:66px;text-align:left"><span class="s" style="transform-origin:left">213</span></div><div class="t" style="left:1608px;top:301px;width:66px;text-align:left"><span class="s" style="transform-origin:left">17.64</span></div><div class="t" style="left:1675px;top:301px;width:66px;text-align:left"><span class="s" style="transform-origin:left">59%</span></div><div class="t" style="left:1742px;top:301px;width:66px;text-align:left"><span class="s" style="transform-origin:left">432</span></div><div class="t" style="left:1809px;top:301px;width:66px;text-align:left"><span class="s" style="transform-origin:left">305</span></div><div class="t" style="left:1608px;top:343px;width:66px;text-align:left"><span class="s" style="transform-origin:left">25.13</span></div><div class="t" style="left:1675px;top:343px;width:66px;text-align:left"><span class="s" style="transform-origin:left">58%</span></div><div class="t" style="left:1742px;top:343px;width:66px;text-align:left"><span class="s" style="transform-origin:left">206</span></div><div class="t" style="left:1809px;top:343px;width:66px;text-align:left"><span class="s" style="transform-origin:left">148</span></div><div class="t" style="left:1608px;top:386px;width:66px;text-align:right"><span class="s" style="transform-origin:right">28,553.98</span></div><div class="t" style="left:1675px;top:386px;width:66px;text-align:right"><span class="s" style="transform-origin:right">28,516.99</span></div><div class="t" style="left:1742px;top:386px;width:66px;text-align:right"><span class="s" style="transform-origin:right">28,576.97</span></div><div class="t" style="left:1809px;top:386px;width:66px;text-align:right"><span class="s" style="transform-origin:right">28,443.74</span></div><div class="t" style="left:1608px;top:428px;width:66px;text-align:right"><span class="s" style="transform-origin:right">1,133.48</span></div><div class="t" style="left:1742px;top:428px;width:66px;text-align:right"><span class="s" style="transform-origin:right">1,919.52</span></div><div class="t tj" style="left:1675px;top:450px;width:66px;text-align:left"><span class="j">下降</span></div><div class="t tj" style="left:1742px;top:450px;width:133px;text-align:left"><span class="j">ジャスダック</span></div><div class="t tj" style="left:1608px;top:471px;width:66px;text-align:left"><span class="j">新</span></div><div class="t tj" style="left:1675px;top:471px;width:66px;text-align:left"><span class="j">下降</span></div><div class="t" style="left:1742px;top:470px;width:66px;text-align:right"><span class="s" style="transform-origin:right">3874.18</span></div><div class="t tj" style="left:1809px;top:471px;width:66px;text-align:left"><span class="j">陽</span></div><div class="t" style="left:1608px;top:512px;width:66px;text-align:right"><span class="s" style="transform-origin:right">28410</span></div><div class="t" style="left:1608px;top:554px;width:66px;text-align:right"><span class="s" style="transform-origin:right">34,312.00</span></div><div class="t" style="left:1608px;top:598px;width:66px;text-align:right"><span class="s" style="transform-origin:right">108.78</span></div><div class="t" style="left:1675px;top:598px;width:66px;text-align:right"><span class="s" style="transform-origin:right">108.79</span></div><div class="t" style="left:1742px;top:598px;width:66px;text-align:right"><span class="s" style="transform-origin:right">108.9</span></div><div class="t" style="left:1809px;top:598px;width:66px;text-align:right"><span class="s" style="transform-origin:right">108.69</span></div><div class="t tj" style="left:1608px;top:641px;width:66px;text-align:left"><span class="j">前日比</span></div><div class="t" style="left:1675px;top:640px;width:66px;text-align:left"><span class="s" style="transform-origin:left">23</span></div><div class="t tj" style="left:1742px;top:641px;width:66px;text-align:left"><span class="j">前日比</span></div><div class="t" style="left:1809px;top:640px;width:66px;text-align:left"><span class="s" style="transform-origin:left">-24</span></div><div class="t" style="left:1608px;top:682px;width:66px;text-align:left"><span class="s" style="transform-origin:left">385</span></div><div class="t" style="left:1675px;top:682px;width:66px;text-align:left"><span class="s" style="transform-origin:left">21</span></div><div class="t" style="left:1742px;top:682px;width:66px;text-align:left"><span class="s" style="transform-origin:left">771</span></div><div class="t" style="left:1809px;top:682px;width:66px;text-align:left"><span class="s" style="transform-origin:left">-8</span></div></div>
<!-- FORMULA BAR -->
<div class="a" style="left:0;top:198px;width:1920px;height:82px;background:#e6e6e6"></div>
<div class="a" style="left:6px;top:210px;width:127px;height:36px;background:#fff;border:1px solid #d4d4d4"></div>
<div class="a" style="left:14px;top:220px;font-size:17px;color:#444">M3</div>
<svg class="a" style="left:117px;top:226px" width="9" height="5" viewBox="0 0 9 5"><path d="M0 0 H9 L4.5 5 Z" fill="#666"></path></svg>
<div class="a" style="left:150px;top:221px;width:3px;height:3px;background:#9a9a9a;box-shadow:0 5px 0 #9a9a9a,0 10px 0 #9a9a9a"></div>
<div class="a" style="left:170px;top:210px;width:137px;height:36px;background:#fff;border:1px solid #d4d4d4"></div>
<svg class="a" style="left:184px;top:219px" width="16" height="16" viewBox="0 0 16 16"><path d="M1 1 L15 15 M15 1 L1 15" stroke="#a0a0a0" stroke-width="1.8"></path></svg>
<svg class="a" style="left:228px;top:220px" width="20" height="15" viewBox="0 0 20 15"><path d="M1 8 L7 14 L19 2" fill="none" stroke="#c8c8c8" stroke-width="2.5"></path></svg>
<div class="a" style="left:273px;top:214px;font-size:19px;color:#555;font-family:'Liberation Serif',serif;font-style:italic;font-weight:bold">fx</div>
<div class="a" style="left:310px;top:210px;width:1604px;height:36px;background:#fdfdfd;border:1px solid #d4d4d4"></div>
<div class="a" style="left:325px;top:218px;font-size:17px;color:#222">=N3/N2</div>
<svg class="a" style="left:1899px;top:224px" width="10" height="7" viewBox="0 0 10 7"><path d="M0 0 L5 3.5 L10 0 V2.5 L5 7 L0 2.5 Z" fill="#666"></path></svg>

<!-- HEADERS -->
<div class="a" style="left:0;top:279px;width:25px;height:696px;background:#e6e6e6"></div>
<div class="a" style="left:0;top:279px;width:1895px;height:1px;background:#ababab"></div>
<div class="a" style="left:25px;top:258px;width:1px;height:717px;background:#ababab"></div>
<svg class="a" style="left:8px;top:262px" width="15" height="15" viewBox="0 0 15 15"><path d="M15 0 V15 H0 Z" fill="#b4b4b4"></path></svg>
<div class="a" style="left:293px;top:258px;width:67px;height:21px;background:#d2d2d2"></div>
<div class="a" style="left:293px;top:277px;width:68px;height:2px;background:#217346"></div>
<div class="a hd" style="left:26px;top:261px;width:66px;color:#444">I</div><div class="a" style="left:92px;top:258px;width:1px;height:21px;background:#c6c6c6"></div><div class="a hd" style="left:93px;top:261px;width:66px;color:#444">J</div><div class="a" style="left:159px;top:258px;width:1px;height:21px;background:#c6c6c6"></div><div class="a hd" style="left:160px;top:261px;width:66px;color:#444">K</div><div class="a" style="left:226px;top:258px;width:1px;height:21px;background:#c6c6c6"></div><div class="a hd" style="left:227px;top:261px;width:66px;color:#444">L</div><div class="a" style="left:293px;top:258px;width:1px;height:21px;background:#c6c6c6"></div><div class="a hd" style="left:294px;top:261px;width:66px;color:#217346">M</div><div class="a" style="left:360px;top:258px;width:1px;height:21px;background:#c6c6c6"></div><div class="a hd" style="left:361px;top:261px;width:66px;color:#444">N</div><div class="a" style="left:427px;top:258px;width:1px;height:21px;background:#c6c6c6"></div><div class="a hd" style="left:428px;top:261px;width:66px;color:#444">O</div><div class="a" style="left:494px;top:258px;width:1px;height:21px;background:#c6c6c6"></div><div class="a hd" style="left:495px;top:261px;width:66px;color:#444">P</div><div class="a" style="left:561px;top:258px;width:1px;height:21px;background:#c6c6c6"></div><div class="a hd" style="left:562px;top:261px;width:66px;color:#444">Q</div><div class="a" style="left:628px;top:258px;width:1px;height:21px;background:#c6c6c6"></div><div class="a hd" style="left:629px;top:261px;width:66px;color:#444">R</div><div class="a" style="left:695px;top:258px;width:1px;height:21px;background:#c6c6c6"></div><div class="a hd" style="left:696px;top:261px;width:66px;color:#444">S</div><div class="a" style="left:762px;top:258px;width:1px;height:21px;background:#c6c6c6"></div><div class="a hd" style="left:763px;top:261px;width:66px;color:#444">T</div><div class="a" style="left:829px;top:258px;width:1px;height:21px;background:#c6c6c6"></div><div class="a hd" style="left:830px;top:261px;width:66px;color:#444">U</div><div class="a" style="left:896px;top:258px;width:1px;height:21px;background:#c6c6c6"></div><div class="a hd" style="left:897px;top:261px;width:66px;color:#444">V</div><div class="a" style="left:963px;top:258px;width:1px;height:21px;background:#c6c6c6"></div><div class="a hd" style="left:964px;top:261px;width:66px;color:#444">W</div><div class="a" style="left:1030px;top:258px;width:1px;height:21px;background:#c6c6c6"></div><div class="a hd" style="left:1031px;top:261px;width:66px;color:#444">X</div><div class="a" style="left:1097px;top:258px;width:1px;height:21px;background:#c6c6c6"></div><div class="a hd" style="left:1098px;top:261px;width:66px;color:#444">Y</div><div class="a" style="left:1164px;top:258px;width:1px;height:21px;background:#c6c6c6"></div><div class="a hd" style="left:1165px;top:261px;width:66px;color:#444">Z</div><div class="a" style="left:1231px;top:258px;width:1px;height:21px;background:#c6c6c6"></div><div class="a hd" style="left:1232px;top:261px;width:66px;color:#444">AA</div><div class="a" style="left:1298px;top:258px;width:1px;height:21px;background:#c6c6c6"></div><div class="a hd" style="left:1299px;top:261px;width:66px;color:#444">AB</div><div class="a" style="left:1365px;top:258px;width:1px;height:21px;background:#c6c6c6"></div><div class="a hd" style="left:1366px;top:261px;width:66px;color:#444">AC</div><div class="a" style="left:1432px;top:258px;width:1px;height:21px;background:#c6c6c6"></div><div class="a hd" style="left:1433px;top:261px;width:66px;color:#444">AD</div><div class="a" style="left:1499px;top:258px;width:1px;height:21px;background:#c6c6c6"></div><div class="a hd" style="left:1500px;top:261px;width:66px;color:#444">AE</div><div class="a" style="left:1566px;top:258px;width:1px;height:21px;background:#c6c6c6"></div><div class="a hd" style="left:1567px;top:261px;width:66px;color:#444">AF</div><div class="a" style="left:1633px;top:258px;width:1px;height:21px;background:#c6c6c6"></div><div class="a hd" style="left:1634px;top:261px;width:66px;color:#444">AG</div><div class="a" style="left:1700px;top:258px;width:1px;height:21px;background:#c6c6c6"></div><div class="a hd" style="left:1701px;top:261px;width:66px;color:#444">AH</div><div class="a" style="left:1767px;top:258px;width:1px;height:21px;background:#c6c6c6"></div><div class="a hd" style="left:1768px;top:261px;width:66px;color:#444">AI</div><div class="a" style="left:1834px;top:258px;width:1px;height:21px;background:#c6c6c6"></div><div class="a hd" style="left:1835px;top:261px;width:66px;color:#444">AJ</div>
<div class="a" style="left:0;top:323px;width:25px;height:22px;background:#d2d2d2"></div>
<div class="a" style="left:23px;top:323px;width:2px;height:22px;background:#217346"></div>
<div class="a" style="left:0;top:301px;width:25px;height:1px;background:#c6c6c6"></div><div class="a hd" style="left:0;top:283px;width:25px;color:#444;font-size:14px;transform:scaleX(0.88)">1</div><div class="a" style="left:0;top:323px;width:25px;height:1px;background:#c6c6c6"></div><div class="a hd" style="left:0;top:305px;width:25px;color:#444;font-size:14px;transform:scaleX(0.88)">2</div><div class="a" style="left:0;top:345px;width:25px;height:1px;background:#c6c6c6"></div><div class="a hd" style="left:0;top:327px;width:25px;color:#217346;font-size:14px;transform:scaleX(0.88)">3</div><div class="a" style="left:0;top:366px;width:25px;height:1px;background:#c6c6c6"></div><div class="a hd" style="left:0;top:348px;width:25px;color:#444;font-size:14px;transform:scaleX(0.88)">4</div><div class="a" style="left:0;top:387px;width:25px;height:1px;background:#c6c6c6"></div><div class="a hd" style="left:0;top:369px;width:25px;color:#444;font-size:14px;transform:scaleX(0.88)">5</div><div class="a" style="left:0;top:408px;width:25px;height:1px;background:#c6c6c6"></div><div class="a hd" style="left:0;top:390px;width:25px;color:#444;font-size:14px;transform:scaleX(0.88)">6</div><div class="a" style="left:0;top:429px;width:25px;height:1px;background:#c6c6c6"></div><div class="a hd" style="left:0;top:411px;width:25px;color:#444;font-size:14px;transform:scaleX(0.88)">7</div><div class="a" style="left:0;top:451px;width:25px;height:1px;background:#c6c6c6"></div><div class="a hd" style="left:0;top:433px;width:25px;color:#444;font-size:14px;transform:scaleX(0.88)">8</div><div class="a" style="left:0;top:473px;width:25px;height:1px;background:#c6c6c6"></div><div class="a hd" style="left:0;top:455px;width:25px;color:#444;font-size:14px;transform:scaleX(0.88)">9</div><div class="a" style="left:0;top:494px;width:25px;height:1px;background:#c6c6c6"></div><div class="a hd" style="left:0;top:476px;width:25px;color:#444;font-size:14px;transform:scaleX(0.88)">10</div><div class="a" style="left:0;top:515px;width:25px;height:1px;background:#c6c6c6"></div><div class="a hd" style="left:0;top:497px;width:25px;color:#444;font-size:14px;transform:scaleX(0.88)">11</div><div class="a" style="left:0;top:536px;width:25px;height:1px;background:#c6c6c6"></div><div class="a hd" style="left:0;top:518px;width:25px;color:#444;font-size:14px;transform:scaleX(0.88)">12</div><div class="a" style="left:0;top:557px;width:25px;height:1px;background:#c6c6c6"></div><div class="a hd" style="left:0;top:539px;width:25px;color:#444;font-size:14px;transform:scaleX(0.88)">13</div><div class="a" style="left:0;top:578px;width:25px;height:1px;background:#c6c6c6"></div><div class="a hd" style="left:0;top:560px;width:25px;color:#444;font-size:14px;transform:scaleX(0.88)">14</div><div class="a" style="left:0;top:599px;width:25px;height:1px;background:#c6c6c6"></div><div class="a hd" style="left:0;top:581px;width:25px;color:#444;font-size:14px;transform:scaleX(0.88)">15</div><div class="a" style="left:0;top:620px;width:25px;height:1px;background:#c6c6c6"></div><div class="a hd" style="left:0;top:602px;width:25px;color:#444;font-size:14px;transform:scaleX(0.88)">16</div><div class="a" style="left:0;top:641px;width:25px;height:1px;background:#c6c6c6"></div><div class="a hd" style="left:0;top:623px;width:25px;color:#444;font-size:14px;transform:scaleX(0.88)">17</div><div class="a" style="left:0;top:662px;width:25px;height:1px;background:#c6c6c6"></div><div class="a hd" style="left:0;top:644px;width:25px;color:#444;font-size:14px;transform:scaleX(0.88)">18</div><div class="a" style="left:0;top:684px;width:25px;height:1px;background:#c6c6c6"></div><div class="a hd" style="left:0;top:666px;width:25px;color:#444;font-size:14px;transform:scaleX(0.88)">19</div><div class="a" style="left:0;top:705px;width:25px;height:1px;background:#c6c6c6"></div><div class="a hd" style="left:0;top:687px;width:25px;color:#444;font-size:14px;transform:scaleX(0.88)">20</div><div class="a" style="left:0;top:726px;width:25px;height:1px;background:#c6c6c6"></div><div class="a hd" style="left:0;top:708px;width:25px;color:#444;font-size:14px;transform:scaleX(0.88)">21</div><div class="a" style="left:0;top:747px;width:25px;height:1px;background:#c6c6c6"></div><div class="a hd" style="left:0;top:729px;width:25px;color:#444;font-size:14px;transform:scaleX(0.88)">22</div><div class="a" style="left:0;top:768px;width:25px;height:1px;background:#c6c6c6"></div><div class="a hd" style="left:0;top:750px;width:25px;color:#444;font-size:14px;transform:scaleX(0.88)">23</div><div class="a" style="left:0;top:789px;width:25px;height:1px;background:#c6c6c6"></div><div class="a hd" style="left:0;top:771px;width:25px;color:#444;font-size:14px;transform:scaleX(0.88)">24</div><div class="a" style="left:0;top:810px;width:25px;height:1px;background:#c6c6c6"></div><div class="a hd" style="left:0;top:792px;width:25px;color:#444;font-size:14px;transform:scaleX(0.88)">25</div><div class="a" style="left:0;top:831px;width:25px;height:1px;background:#c6c6c6"></div><div class="a hd" style="left:0;top:813px;width:25px;color:#444;font-size:14px;transform:scaleX(0.88)">26</div><div class="a" style="left:0;top:852px;width:25px;height:1px;background:#c6c6c6"></div><div class="a hd" style="left:0;top:834px;width:25px;color:#444;font-size:14px;transform:scaleX(0.88)">27</div><div class="a" style="left:0;top:874px;width:25px;height:1px;background:#c6c6c6"></div><div class="a hd" style="left:0;top:856px;width:25px;color:#444;font-size:14px;transform:scaleX(0.88)">28</div><div class="a" style="left:0;top:896px;width:25px;height:1px;background:#c6c6c6"></div><div class="a hd" style="left:0;top:878px;width:25px;color:#444;font-size:14px;transform:scaleX(0.88)">29</div><div class="a" style="left:0;top:917px;width:25px;height:1px;background:#c6c6c6"></div><div class="a hd" style="left:0;top:899px;width:25px;color:#444;font-size:14px;transform:scaleX(0.88)">30</div><div class="a" style="left:0;top:938px;width:25px;height:1px;background:#c6c6c6"></div><div class="a hd" style="left:0;top:920px;width:25px;color:#444;font-size:14px;transform:scaleX(0.88)">31</div><div class="a" style="left:0;top:959px;width:25px;height:1px;background:#c6c6c6"></div><div class="a hd" style="left:0;top:941px;width:25px;color:#444;font-size:14px;transform:scaleX(0.88)">32</div><div class="a hd" style="left:0;top:962px;width:25px;color:#444;font-size:14px;transform:scaleX(0.88)">33</div>

<!-- SELECTION -->
<svg class="a" style="left:93px;top:960px" width="6" height="6" viewBox="0 0 6 6"><path d="M0 0 H6 L0 6 Z" fill="#1e8a3c"></path></svg>
<div class="a" style="left:292px;top:322px;width:70px;height:24px;border:2px solid #217346"></div>
<div class="a" style="left:357px;top:342px;width:6px;height:6px;background:#217346;border:1px solid #fff"></div>

<!-- GRID EDGE + VSCROLL -->
<div class="a" style="left:1894px;top:279px;width:1px;height:697px;background:#a6a6a6"></div>
<div class="a" style="left:1895px;top:258px;width:25px;height:717px;background:#e6e6e6"></div>
<div class="a" style="left:1898px;top:279px;width:19px;height:679px;background:#dadada"></div>
<div class="a sb" style="left:1898px;top:260px;width:19px;height:19px"></div>
<svg class="a" style="left:1902px;top:266px" width="10" height="6" viewBox="0 0 10 6"><path d="M0 6 L5 0 L10 6 Z" fill="#707070"></path></svg>
<div class="a sb" style="left:1898px;top:279px;width:19px;height:21px"></div>
<div class="a sb" style="left:1898px;top:957px;width:19px;height:19px"></div>
<svg class="a" style="left:1902px;top:964px" width="10" height="6" viewBox="0 0 10 6"><path d="M0 0 L5 6 L10 0 Z" fill="#707070"></path></svg>

<!-- SHEET TABS -->
<div class="a" style="left:0;top:975px;width:1920px;height:28px;background:#e6e6e6;border-top:1px solid #c8c8c8"></div>
<div class="a" style="left:0;top:1002px;width:1920px;height:2px;background:#cfcfcf"></div>
<svg class="a" style="left:27px;top:984px" width="7" height="10" viewBox="0 0 7 10"><path d="M6 0 V10 L0 5 Z" fill="#217346"></path></svg>
<svg class="a" style="left:55px;top:984px" width="7" height="10" viewBox="0 0 7 10"><path d="M0 0 V10 L6 5 Z" fill="#217346"></path></svg>
<div class="a" style="left:79px;top:979px;font-size:15px;color:#217346;font-weight:bold;letter-spacing:1px">...</div>
<div class="a tsep" style="left:100px"></div>
<div class="a stab" style="left: 103px; width: 52px; background: rgb(255, 255, 0); letter-spacing: 1.16px;">RSI</div>
<div class="a tsep" style="left:157px"></div>
<div class="a stab" style="left: 160px; width: 138px; background: rgb(255, 255, 0); letter-spacing: -2px;">エンベロープ指標</div>
<div class="a tsep" style="left:300px"></div>
<div class="a stab" style="left: 303px; width: 150px; color: rgb(68, 68, 68); letter-spacing: -0.14px;">業種別張り付けば</div>
<div class="a tsep" style="left:453px"></div>
<div class="a stab" style="left: 456px; width: 104px; background: rgb(237, 125, 49); letter-spacing: 1.5px;">業種別株価</div>
<div class="a tsep" style="left:562px"></div>
<div class="a stab" style="left: 565px; width: 70px; background: rgb(237, 125, 49); letter-spacing: 1px;">業種別</div>
<div class="a tsep" style="left:637px"></div>
<div class="a stab" style="left: 640px; width: 152px; background: rgb(237, 125, 49); letter-spacing: 1.55px;">20日騰落上位50</div>
<div class="a tsep" style="left:794px"></div>
<div class="a stab" style="left: 797px; width: 175px; background: rgb(237, 125, 49); letter-spacing: -0.89px;">日別と株価による診断</div>
<div class="a" style="left:974px;top:975px;width:113px;height:25px;background:#fff"></div>
<div class="a" style="left:977px;top:977px;width:107px;height:20px;background:linear-gradient(#fff,#f7c6a4)"></div>
<div class="a" style="left:974px;top:998px;width:113px;height:2px;background:#217346"></div>
<div class="a stab" style="left: 974px; width: 113px; color: rgb(33, 115, 70); white-space: pre; top: 976px; letter-spacing: -0.48px;">累計  データ</div>
<div class="a stab" style="left: 1098px; width: 42px; color: rgb(68, 68, 68); letter-spacing: -4px;">トレン</div>
<div class="a" style="left:1144px;top:979px;font-size:15px;color:#217346;font-weight:bold;letter-spacing:1px">...</div>
<svg class="a" style="left:1170px;top:979px" width="22" height="22" viewBox="0 0 22 22"><circle cx="11" cy="11" r="9.5" fill="none" stroke="#777" stroke-width="1.2"></circle><path d="M11 5 V17 M5 11 H17" stroke="#777" stroke-width="1.6"></path></svg>
<div class="a" style="left:1207px;top:983px;width:3px;height:3px;background:#aaa;box-shadow:0 5px 0 #aaa,0 10px 0 #aaa"></div>
<div class="a" style="left:1245px;top:980px;width:632px;height:19px;background:#dadada"></div>
<div class="a sb" style="left:1225px;top:980px;width:19px;height:19px"></div>
<svg class="a" style="left:1232px;top:985px" width="6" height="10" viewBox="0 0 6 10"><path d="M6 0 V10 L0 5 Z" fill="#707070"></path></svg>
<div class="a sb" style="left:1251px;top:980px;width:23px;height:19px"></div>
<div class="a sb" style="left:1876px;top:980px;width:19px;height:19px"></div>
<svg class="a" style="left:1884px;top:985px" width="6" height="10" viewBox="0 0 6 10"><path d="M0 0 V10 L6 5 Z" fill="#707070"></path></svg>

<!-- STATUS BAR -->
<div class="a" style="left:0;top:1004px;width:1920px;height:26px;background:#f3f3f3"></div>
<div class="a rt" style="left: 9px; top: 1008px; font-size: 14px; letter-spacing: 1.33px;">準備完了</div>
<div class="a" style="left:1538px;top:1004px;width:49px;height:26px;background:#c8c8c8"></div>
<svg class="a" style="left:1555px;top:1009px" width="17" height="16" viewBox="0 0 17 16"><path d="M0.5 0.5 H16.5 V15.5 H0.5 Z M0.5 5.5 H16.5 M0.5 10.5 H16.5 M5.8 0.5 V15.5 M11.2 0.5 V15.5" fill="none" stroke="#666"></path></svg>
<svg class="a" style="left:1604px;top:1009px" width="17" height="16" viewBox="0 0 17 16"><rect x="0.5" y="0.5" width="16" height="15" fill="none" stroke="#666"></rect><rect x="3.5" y="3.5" width="10" height="9" fill="none" stroke="#666"></rect><path d="M5 6 H12 M5 8 H12 M5 10 H12" stroke="#666"></path></svg>
<svg class="a" style="left:1654px;top:1009px" width="17" height="16" viewBox="0 0 17 16"><path d="M0.5 0.5 H16.5 V15.5 H0.5 Z M0.5 10.5 H8.5 V15.5 M8.5 0.5 V10.5 M6 0.5 V10.5" fill="none" stroke="#666"></path></svg>
<div class="a" style="left:1695px;top:1016px;width:10px;height:1px;background:#555"></div>
<div class="a" style="left:1712px;top:1016px;width:123px;height:1px;background:#b0b0b0"></div>
<div class="a" style="left:1773px;top:1012px;width:1px;height:9px;background:#b0b0b0"></div>
<div class="a" style="left:1751px;top:1009px;width:6px;height:15px;background:#666"></div>
<div class="a" style="left:1842px;top:1016px;width:10px;height:1px;background:#555"></div>
<div class="a" style="left:1846px;top:1011px;width:1px;height:11px;background:#555"></div>
<div class="a rt" style="left:1868px;top:1008px;font-size:15px;color:#444">70%</div>

<!-- TASKBAR -->
<div class="a" style="left:0;top:1030px;width:1920px;height:50px;background:linear-gradient(90deg,#cfe2ea 0%,#cde6ec 50%,#c9eaee 100%)"></div>
<svg class="a" style="left:20px;top:1045px" width="20" height="20" viewBox="0 0 20 20"><path d="M0 2.8 L8.2 1.7 V9.5 H0 Z M9.2 1.5 L20 0 V9.5 H9.2 Z M0 10.5 H8.2 V18.3 L0 17.2 Z M9.2 10.5 H20 V20 L9.2 18.5 Z" fill="#111"></path></svg>
<div class="a" style="left:61px;top:1031px;width:428px;height:49px;background:#fff;border-right:1px solid #aaa"></div>
<svg class="a" style="left:75px;top:1045px" width="21" height="21" viewBox="0 0 21 21"><circle cx="13" cy="8" r="6.5" fill="none" stroke="#222" stroke-width="1.6"></circle><path d="M8.5 12.5 L1 20" stroke="#222" stroke-width="1.8"></path></svg>
<div class="a fit" style="left: 110px; top: 1043px; font-size: 17px; color: rgb(51, 51, 51); letter-spacing: -1.38px;">ここに入力して検索</div>
<svg class="a" style="left:509px;top:1044px" width="22" height="22" viewBox="0 0 22 22"><circle cx="11" cy="11" r="8.5" fill="none" stroke="#111" stroke-width="2.2"></circle></svg>
<svg class="a" style="left:569px;top:1045px" width="22" height="20" viewBox="0 0 22 20"><path d="M1 1 V3 H14 V1 M1 19 V17 H14 V19 M1.5 6.5 H13.5 V13.5 H1.5 Z M19 0 V20" fill="none" stroke="#111" stroke-width="1.2"></path><rect x="17.5" y="7.5" width="3" height="3" fill="#111"></rect></svg>
<svg class="a" style="left:630px;top:1043px" width="28" height="26" viewBox="0 0 28 26"><path d="M0 2 H10 L12 4 V8 H0 Z" fill="#e8a800"></path><rect x="0" y="4" width="28" height="18" rx="1" fill="#f9d466"></rect><path d="M5 25 V14 C5 12 6 11 8 11 H20 C22 11 23 12 23 14 V25 H18 V17 H10 V25 Z" fill="#3d8fd8"></path></svg>
<svg class="a" style="left:691px;top:1041px" width="30" height="30" viewBox="0 0 30 30"><path d="M9 8 V5 C9 2 11 1 15 1 C19 1 21 2 21 5 V8" fill="none" stroke="#222" stroke-width="2.2"></path><rect x="0" y="8" width="30" height="22" rx="1.5" fill="#2b2b2b"></rect><rect x="9" y="13" width="5.5" height="5.5" fill="#f25022"></rect><rect x="15.5" y="13" width="5.5" height="5.5" fill="#7fba00"></rect><rect x="9" y="19.5" width="5.5" height="5.5" fill="#00a4ef"></rect><rect x="15.5" y="19.5" width="5.5" height="5.5" fill="#ffb900"></rect></svg>
<svg class="a" style="left:753px;top:1041px" width="31" height="30" viewBox="0 0 31 30"><path d="M0 10 L15.5 1 L31 10 V29 H0 Z" fill="#1f7bd6"></path><path d="M4 6 H27 V18 L15.5 24 L4 18 Z" fill="#fff"></path><path d="M0 10 L15.5 20 L31 10 V29 H0 Z" fill="#44a3ee"></path></svg>
<div class="a" style="left:815px;top:1040px;width:30px;height:30px;background:#f2592a"></div>
<svg class="a" style="left:815px;top:1040px" width="30" height="30" viewBox="0 0 30 30"><circle cx="15" cy="15" r="10" fill="none" stroke="#fff" stroke-width="2"></circle><circle cx="15" cy="13" r="4.5" fill="#fff"></circle><path d="M8 22 C10 18 20 18 22 22" fill="#fff"></path></svg>
<div class="a" style="left:878px;top:1041px;width:28px;height:28px;background:linear-gradient(#5a8cf8,#1c3fd4);border-radius:5px"></div>
<div class="a" style="left:881px;top:1040px;font-size:19px;color:#fff;font-weight:bold">@</div>
<div class="a" style="left:881px;top:1058px;font-size:8px;color:#fff">menu</div>
<svg class="a" style="left:938px;top:1039px" width="32" height="32" viewBox="0 0 32 32"><defs><linearGradient id="eg" x1="0" y1="0.3" x2="1" y2="0.6"><stop offset="0" stop-color="#1a8de0"></stop><stop offset="0.45" stop-color="#2ec0e0"></stop><stop offset="1" stop-color="#5fe06a"></stop></linearGradient></defs><circle cx="16" cy="16" r="15.5" fill="url(#eg)"></circle><path d="M32 19 C30 23 25 25 20 24 L20 32 L32 32 Z" fill="#d2e5ea"></path><path d="M1 18 C1 27 8 32 16 32 C22 32 27 29 30 25 C25 28 19 28 16 25 C13 22 13 17 16 14 C10 13 3 14 1 18 Z" fill="#0f5aa8"></path><ellipse cx="16" cy="15.5" rx="4" ry="4.3" fill="#dfeef2"></ellipse></svg>
<div class="a" style="left:929px;top:1077px;width:51px;height:3px;background:#1e6fd9"></div>
<div class="a" style="left:986px;top:1030px;width:61px;height:50px;background:rgba(255,255,255,0.45)"></div>
<div class="a" style="left:986px;top:1077px;width:61px;height:3px;background:#1e6fd9"></div>
<svg class="a" style="left:1001px;top:1041px" width="30" height="28" viewBox="0 0 30 28"><rect x="7" y="0" width="22" height="27" rx="1.5" fill="#21a366"></rect><rect x="18" y="0" width="11" height="7" fill="#33c481"></rect><rect x="7" y="14" width="22" height="6.5" fill="#107c41"></rect><rect x="7" y="20.5" width="22" height="6.5" rx="1" fill="#185c37"></rect><rect x="0" y="6" width="16" height="16" rx="1.2" fill="#107c41"></rect><path d="M4.5 10 L11.5 18.5 M11.5 10 L4.5 18.5" stroke="#fff" stroke-width="2"></path></svg>
<svg class="a" style="left:1592px;top:1049px" width="16" height="10" viewBox="0 0 16 10"><path d="M1 9 L8 2 L15 9" fill="none" stroke="#111" stroke-width="1.4"></path></svg>
<svg class="a" style="left:1618px;top:1046px" width="22" height="16" viewBox="0 0 22 16"><path d="M5 15 C1 15 0.5 10 4 9 C4 4 9 2 12 5 C15 1 21 3 20 9 C22 10 22 15 18 15 Z" fill="#888" stroke="#333" stroke-width="1.2"></path></svg>
<svg class="a" style="left:1648px;top:1047px" width="22" height="16" viewBox="0 0 22 16"><rect x="4.5" y="4.5" width="14" height="9" fill="none" stroke="#111" stroke-width="1.3"></rect><rect x="6.5" y="6.5" width="10" height="5" fill="#111"></rect><rect x="18.5" y="7" width="2" height="4" fill="#111"></rect><path d="M1 3 H5 M3 0 V7" stroke="#111" stroke-width="1.2"></path></svg>
<svg class="a" style="left:1680px;top:1045px" width="20" height="18" viewBox="0 0 20 18"><path d="M2 14 C5 6 13 4 18 6 M5 15 C7 10 12 8 17 9 M8 16 C9 13 12 12 16 12" fill="none" stroke="#333" stroke-width="1.3"></path><circle cx="15.5" cy="15.5" r="1.8" fill="#111"></circle></svg>
<svg class="a" style="left:1708px;top:1046px" width="20" height="18" viewBox="0 0 20 18"><path d="M1 6 H5 L10 2 V16 L5 12 H1 Z" fill="none" stroke="#111" stroke-width="1.2"></path><path d="M13 6 C14.5 8 14.5 10 13 12 M15.5 4 C18 7 18 11 15.5 14" fill="none" stroke="#333" stroke-width="1.2"></path></svg>
<div class="a" style="left:1739px;top:1040px;font-size:22px;color:#111">A</div>
<div class="a" style="left:1790px;top:1035px;font-size:14px;color:#111">20:26</div>
<div class="a" style="left:1770px;top:1057px;font-size:15px;color:#111">2021/06/02</div>
<svg class="a" style="left:1868px;top:1043px" width="36" height="32" viewBox="0 0 36 32"><path d="M1 1 H21 V16 H10 L5 20 V16 H1 Z" fill="#111"></path><path d="M4 5 H18 M4 8 H18 M4 11 H14" stroke="#cde6ec" stroke-width="1.2"></path><circle cx="20" cy="21" r="9" fill="#e0e0e0" stroke="#999" stroke-width="1.5"></circle><text x="16.5" y="26" font-size="13" fill="#111" font-family="Liberation Sans">1</text></svg>
<div class="a" style="left:1913px;top:1030px;width:1px;height:50px;background:#9ab"></div>

</body></html>
